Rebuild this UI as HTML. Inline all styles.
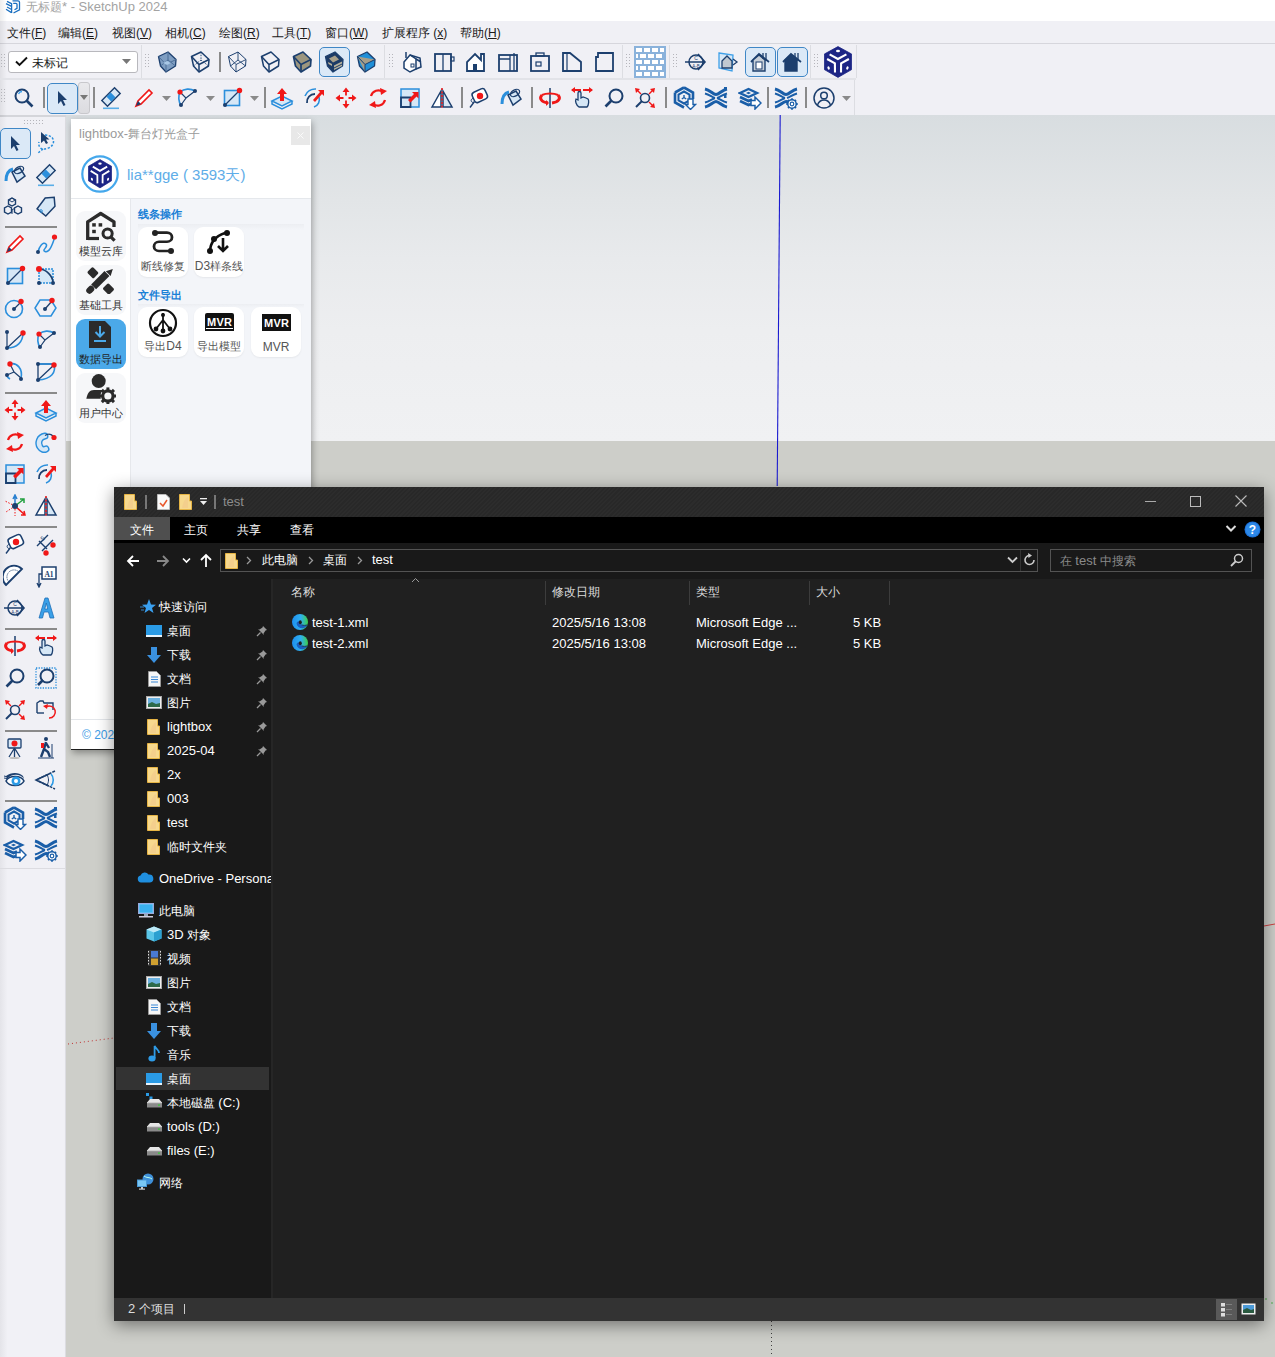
<!DOCTYPE html><html><head><meta charset="utf-8"><style>
*{box-sizing:border-box;margin:0;padding:0}
html,body{width:1275px;height:1357px;overflow:hidden;background:#cfcfca;font-family:"Liberation Sans",sans-serif;position:relative}
.a{position:absolute}
.t{white-space:nowrap}
.c{font-size:12px}
</style></head><body><div class="a" style="left:0px;top:0px;width:1275px;height:21px;background:#fff;"></div>
<div class="a" style="left:0px;top:21px;width:1275px;height:22px;background:#f0f0f5;"></div>
<div class="a" style="left:0px;top:43px;width:1275px;height:1px;background:#d6d6dc;"></div>
<div class="a" style="left:0px;top:44px;width:1275px;height:71px;background:#f0f0f5;"></div>
<div class="a" style="left:0px;top:115px;width:66px;height:2px;background:#d4d5da;"></div>
<div class="a" style="left:66px;top:115px;width:1209px;height:326px;background:linear-gradient(#d8dde0 0%,#e2e5e7 26%,#e8eaec 44%,#edeef0 66%,#f0f1f3 100%)"></div>
<div class="a" style="left:66px;top:441px;width:1275px;height:916px;background:#cdcec9;"></div>
<div class="a" style="left:0px;top:117px;width:66px;height:1240px;background:#f0f0f5;"></div>
<svg class="a" style="left:5px;top:0px;" width="16" height="14" viewBox="0 0 16 14"><path d="M2 1.4L7 3.8M1 3.6L6.5 6.3M2 7L6.5 9.5M1 9.3L6.5 12.6M6.6 3.5V13" fill="none" stroke="#1a6fc0" stroke-width="1.3"/><path d="M7.5 0.8H13Q14.5 0.8 14.5 2.3V9.8L8.5 13M8.2 3.3H11Q12 3.3 12 4.3V8.3L9.5 9.8" fill="none" stroke="#1a6fc0" stroke-width="1.3"/></svg>
<div class="a t" style="left:26px;top:-1.0px;font-size:12px;line-height:16px;color:#a3a3a3;">无标题<span style="font-size:13px">* - SketchUp 2024</span></div>
<div class="a t" style="left:7px;top:25.0px;font-size:12px;line-height:16px;color:#1a1a1a;">文件<span style="font-size:12px">(<u>F</u>)</span></div>
<div class="a t" style="left:58px;top:25.0px;font-size:12px;line-height:16px;color:#1a1a1a;">编辑<span style="font-size:12px">(<u>E</u>)</span></div>
<div class="a t" style="left:112px;top:25.0px;font-size:12px;line-height:16px;color:#1a1a1a;">视图<span style="font-size:12px">(<u>V</u>)</span></div>
<div class="a t" style="left:165px;top:25.0px;font-size:12px;line-height:16px;color:#1a1a1a;">相机<span style="font-size:12px">(<u>C</u>)</span></div>
<div class="a t" style="left:219px;top:25.0px;font-size:12px;line-height:16px;color:#1a1a1a;">绘图<span style="font-size:12px">(<u>R</u>)</span></div>
<div class="a t" style="left:272px;top:25.0px;font-size:12px;line-height:16px;color:#1a1a1a;">工具<span style="font-size:12px">(<u>T</u>)</span></div>
<div class="a t" style="left:325px;top:25.0px;font-size:12px;line-height:16px;color:#1a1a1a;">窗口<span style="font-size:12px">(<u>W</u>)</span></div>
<div class="a t" style="left:382px;top:25.0px;font-size:12px;line-height:16px;color:#1a1a1a;">扩展程序 <span style="font-size:12px">(<u>x</u>)</span></div>
<div class="a t" style="left:460px;top:25.0px;font-size:12px;line-height:16px;color:#1a1a1a;">帮助<span style="font-size:12px">(<u>H</u>)</span></div>
<div class="a" style="left:0px;top:0px;width:7px;height:117px;background:linear-gradient(90deg,rgba(0,0,0,.07),rgba(0,0,0,0));"></div>
<div class="a" style="left:0px;top:78px;width:856px;height:2px;background:#e2e3e8;"></div>
<div class="a" style="left:141px;top:45px;width:1px;height:33px;background:#dcdde2;"></div>
<div class="a" style="left:384px;top:45px;width:1px;height:33px;background:#dcdde2;"></div>
<div class="a" style="left:622px;top:45px;width:1px;height:33px;background:#dcdde2;"></div>
<div class="a" style="left:669px;top:45px;width:1px;height:33px;background:#dcdde2;"></div>
<div class="a" style="left:810px;top:45px;width:1px;height:33px;background:#dcdde2;"></div>
<div class="a" style="left:856px;top:45px;width:1px;height:33px;background:#dcdde2;"></div>
<div class="a" style="left:854px;top:80px;width:1px;height:35px;background:#dcdde2;"></div>
<svg class="a" style="left:1px;top:54px;" width="4" height="15" viewBox="0 0 4 15"><rect x="0" y="0" width="1" height="1" fill="#b5b5bb"/><rect x="3" y="0" width="1" height="1" fill="#b5b5bb"/><rect x="0" y="3" width="1" height="1" fill="#b5b5bb"/><rect x="3" y="3" width="1" height="1" fill="#b5b5bb"/><rect x="0" y="6" width="1" height="1" fill="#b5b5bb"/><rect x="3" y="6" width="1" height="1" fill="#b5b5bb"/><rect x="0" y="9" width="1" height="1" fill="#b5b5bb"/><rect x="3" y="9" width="1" height="1" fill="#b5b5bb"/><rect x="0" y="12" width="1" height="1" fill="#b5b5bb"/><rect x="3" y="12" width="1" height="1" fill="#b5b5bb"/></svg>
<svg class="a" style="left:145px;top:54px;" width="4" height="15" viewBox="0 0 4 15"><rect x="0" y="0" width="1" height="1" fill="#b5b5bb"/><rect x="3" y="0" width="1" height="1" fill="#b5b5bb"/><rect x="0" y="3" width="1" height="1" fill="#b5b5bb"/><rect x="3" y="3" width="1" height="1" fill="#b5b5bb"/><rect x="0" y="6" width="1" height="1" fill="#b5b5bb"/><rect x="3" y="6" width="1" height="1" fill="#b5b5bb"/><rect x="0" y="9" width="1" height="1" fill="#b5b5bb"/><rect x="3" y="9" width="1" height="1" fill="#b5b5bb"/><rect x="0" y="12" width="1" height="1" fill="#b5b5bb"/><rect x="3" y="12" width="1" height="1" fill="#b5b5bb"/></svg>
<svg class="a" style="left:389px;top:54px;" width="4" height="15" viewBox="0 0 4 15"><rect x="0" y="0" width="1" height="1" fill="#b5b5bb"/><rect x="3" y="0" width="1" height="1" fill="#b5b5bb"/><rect x="0" y="3" width="1" height="1" fill="#b5b5bb"/><rect x="3" y="3" width="1" height="1" fill="#b5b5bb"/><rect x="0" y="6" width="1" height="1" fill="#b5b5bb"/><rect x="3" y="6" width="1" height="1" fill="#b5b5bb"/><rect x="0" y="9" width="1" height="1" fill="#b5b5bb"/><rect x="3" y="9" width="1" height="1" fill="#b5b5bb"/><rect x="0" y="12" width="1" height="1" fill="#b5b5bb"/><rect x="3" y="12" width="1" height="1" fill="#b5b5bb"/></svg>
<svg class="a" style="left:626px;top:54px;" width="4" height="15" viewBox="0 0 4 15"><rect x="0" y="0" width="1" height="1" fill="#b5b5bb"/><rect x="3" y="0" width="1" height="1" fill="#b5b5bb"/><rect x="0" y="3" width="1" height="1" fill="#b5b5bb"/><rect x="3" y="3" width="1" height="1" fill="#b5b5bb"/><rect x="0" y="6" width="1" height="1" fill="#b5b5bb"/><rect x="3" y="6" width="1" height="1" fill="#b5b5bb"/><rect x="0" y="9" width="1" height="1" fill="#b5b5bb"/><rect x="3" y="9" width="1" height="1" fill="#b5b5bb"/><rect x="0" y="12" width="1" height="1" fill="#b5b5bb"/><rect x="3" y="12" width="1" height="1" fill="#b5b5bb"/></svg>
<svg class="a" style="left:673px;top:54px;" width="4" height="15" viewBox="0 0 4 15"><rect x="0" y="0" width="1" height="1" fill="#b5b5bb"/><rect x="3" y="0" width="1" height="1" fill="#b5b5bb"/><rect x="0" y="3" width="1" height="1" fill="#b5b5bb"/><rect x="3" y="3" width="1" height="1" fill="#b5b5bb"/><rect x="0" y="6" width="1" height="1" fill="#b5b5bb"/><rect x="3" y="6" width="1" height="1" fill="#b5b5bb"/><rect x="0" y="9" width="1" height="1" fill="#b5b5bb"/><rect x="3" y="9" width="1" height="1" fill="#b5b5bb"/><rect x="0" y="12" width="1" height="1" fill="#b5b5bb"/><rect x="3" y="12" width="1" height="1" fill="#b5b5bb"/></svg>
<svg class="a" style="left:814px;top:54px;" width="4" height="15" viewBox="0 0 4 15"><rect x="0" y="0" width="1" height="1" fill="#b5b5bb"/><rect x="3" y="0" width="1" height="1" fill="#b5b5bb"/><rect x="0" y="3" width="1" height="1" fill="#b5b5bb"/><rect x="3" y="3" width="1" height="1" fill="#b5b5bb"/><rect x="0" y="6" width="1" height="1" fill="#b5b5bb"/><rect x="3" y="6" width="1" height="1" fill="#b5b5bb"/><rect x="0" y="9" width="1" height="1" fill="#b5b5bb"/><rect x="3" y="9" width="1" height="1" fill="#b5b5bb"/><rect x="0" y="12" width="1" height="1" fill="#b5b5bb"/><rect x="3" y="12" width="1" height="1" fill="#b5b5bb"/></svg>
<svg class="a" style="left:1px;top:89px;" width="4" height="15" viewBox="0 0 4 15"><rect x="0" y="0" width="1" height="1" fill="#b5b5bb"/><rect x="3" y="0" width="1" height="1" fill="#b5b5bb"/><rect x="0" y="3" width="1" height="1" fill="#b5b5bb"/><rect x="3" y="3" width="1" height="1" fill="#b5b5bb"/><rect x="0" y="6" width="1" height="1" fill="#b5b5bb"/><rect x="3" y="6" width="1" height="1" fill="#b5b5bb"/><rect x="0" y="9" width="1" height="1" fill="#b5b5bb"/><rect x="3" y="9" width="1" height="1" fill="#b5b5bb"/><rect x="0" y="12" width="1" height="1" fill="#b5b5bb"/><rect x="3" y="12" width="1" height="1" fill="#b5b5bb"/></svg>
<div class="a" style="left:8px;top:51px;width:130px;height:22px;background:#fff;border:1px solid #b8b8bd;border-radius:3px"></div>
<svg class="a" style="left:15px;top:56px;" width="13" height="11" viewBox="0 0 13 11"><path d="M1 5.5L4.5 9L12 1.5" fill="none" stroke="#111" stroke-width="1.9"/></svg>
<div class="a t" style="left:32px;top:55.0px;font-size:12px;line-height:16px;color:#1a1a1a;">未标记</div>
<svg class="a" style="left:122px;top:59px;" width="9" height="5" viewBox="0 0 9 5"><path d="M0 0H9L4.5 5Z" fill="#777"/></svg>
<div class="a" style="left:0px;top:117px;width:7px;height:1240px;background:linear-gradient(90deg,#e4e4e9,#f0f0f5);"></div>
<div class="a" style="left:65px;top:117px;width:1px;height:1240px;background:#dcdce1;"></div>
<div class="a" style="left:0px;top:868px;width:65px;height:1px;background:#dcdce1;"></div>
<div class="a" style="left:7px;top:869px;width:57px;height:488px;background:#f1f1f6;"></div>
<svg class="a" style="left:24px;top:120px;" width="20" height="4" viewBox="0 0 20 4"><rect x="0" y="0" width="1" height="1" fill="#b5b5bb"/><rect x="0" y="3" width="1" height="1" fill="#b5b5bb"/><rect x="3" y="0" width="1" height="1" fill="#b5b5bb"/><rect x="3" y="3" width="1" height="1" fill="#b5b5bb"/><rect x="6" y="0" width="1" height="1" fill="#b5b5bb"/><rect x="6" y="3" width="1" height="1" fill="#b5b5bb"/><rect x="9" y="0" width="1" height="1" fill="#b5b5bb"/><rect x="9" y="3" width="1" height="1" fill="#b5b5bb"/><rect x="12" y="0" width="1" height="1" fill="#b5b5bb"/><rect x="12" y="3" width="1" height="1" fill="#b5b5bb"/><rect x="15" y="0" width="1" height="1" fill="#b5b5bb"/><rect x="15" y="3" width="1" height="1" fill="#b5b5bb"/><rect x="18" y="0" width="1" height="1" fill="#b5b5bb"/><rect x="18" y="3" width="1" height="1" fill="#b5b5bb"/></svg>
<div class="a" style="left:5px;top:226px;width:52px;height:2px;background:#8a8a8a;"></div>
<div class="a" style="left:5px;top:392px;width:52px;height:2px;background:#8a8a8a;"></div>
<div class="a" style="left:5px;top:526px;width:52px;height:2px;background:#8a8a8a;"></div>
<div class="a" style="left:5px;top:628px;width:52px;height:2px;background:#8a8a8a;"></div>
<div class="a" style="left:5px;top:730px;width:52px;height:2px;background:#8a8a8a;"></div>
<div class="a" style="left:5px;top:800px;width:52px;height:2px;background:#8a8a8a;"></div>
<svg class="a" style="left:770px;top:115px;" width="16" height="373" viewBox="0 0 16 373"><path d="M10.2 0L7.2 371" stroke="#1a1ad0" stroke-width="1.1"/></svg>
<svg class="a" style="left:66px;top:1034px;" width="48" height="12" viewBox="0 0 48 12"><path d="M2 10L48 4" stroke="#c03030" stroke-width="1" stroke-dasharray="1 3"/></svg>
<svg class="a" style="left:1264px;top:920px;" width="11" height="8" viewBox="0 0 11 8"><path d="M0 6L11 4" stroke="#d04040" stroke-width="1"/></svg>
<svg class="a" style="left:1262px;top:1296px;" width="13" height="14" viewBox="0 0 13 14"><circle cx="4" cy="3" r="0.7" fill="#2a2"/><circle cx="10" cy="7" r="0.7" fill="#2a2"/></svg>
<svg class="a" style="left:770px;top:1321px;" width="4" height="36" viewBox="0 0 4 36"><path d="M1.5 0V36" stroke="#404040" stroke-width="1" stroke-dasharray="1 3"/></svg>
<div class="a" style="left:71px;top:119px;width:240px;height:631px;background:#fff;box-shadow:1px 3px 7px rgba(0,0,0,.35)"></div>
<div class="a" style="left:71px;top:749px;width:240px;height:1px;background:#1e1e1e;"></div>
<div class="a t" style="left:79px;top:126.0px;font-size:12px;line-height:16px;color:#9a9a9a;"><span style="font-size:13px">lightbox-</span>舞台灯光盒子</div>
<div class="a" style="left:291px;top:126px;width:19px;height:19px;background:#e8e8e8;"></div>
<svg class="a" style="left:297px;top:132px;" width="7" height="7" viewBox="0 0 7 7"><path d="M0.5 0.5L6.5 6.5M6.5 0.5L0.5 6.5" stroke="#fafafa" stroke-width="1"/></svg>
<svg class="a" style="left:81px;top:155px;" width="38" height="38" viewBox="0 0 38 38"><circle cx="19" cy="19" r="17.7" fill="#fff" stroke="#45a8ec" stroke-width="2.2"/></svg>
<div class="a t" style="left:127px;top:165.0px;font-size:15px;line-height:20px;color:#5eade8;">lia**gge ( 3593天)</div>
<svg class="a" style="left:88px;top:159px;" width="24" height="30" viewBox="0 0 24 30"><g transform="scale(0.857,0.92)"><path d="M14 0.6L27.6 8V23.6L14 31.4L0.4 23.6V8Z" fill="#1c2585" stroke="#1c2585" stroke-width="0.8" stroke-linejoin="round"/><path d="M5.6 8.3L13.9 13L22.4 8.3M3.1 13L10.9 17.4L11 26.5M24.9 13L17.1 17.4L17 26.5" fill="none" stroke="#fff" stroke-width="2.1"/><ellipse cx="14" cy="5" rx="2" ry="1.3" fill="#fff"/><ellipse cx="4.6" cy="22" rx="1.1" ry="1.7" fill="#fff" transform="rotate(-25 4.6 22)"/><ellipse cx="23.4" cy="22" rx="1.1" ry="1.7" fill="#fff" transform="rotate(25 23.4 22)"/></g></svg>
<div class="a" style="left:71px;top:198px;width:240px;height:1px;background:#e5e8ec;"></div>
<div class="a" style="left:131px;top:199px;width:180px;height:520px;background:#f3f5f9;"></div>
<div class="a" style="left:130px;top:199px;width:1px;height:520px;background:#e6e8ec;"></div>
<div class="a" style="left:71px;top:719px;width:240px;height:1px;background:#e3e6ea;"></div>
<div class="a t" style="left:82px;top:727.0px;font-size:12px;line-height:16px;color:#3c9be6;">© 2024</div>
<div class="a" style="left:76px;top:211px;width:50px;height:50px;border-radius:9px;background:#f6f7f9"></div>
<div class="a t" style="left:79px;top:244.0px;font-size:11px;line-height:14px;color:#333;">模型云库</div>
<div class="a" style="left:76px;top:265px;width:50px;height:50px;border-radius:9px;background:#f6f7f9"></div>
<div class="a t" style="left:79px;top:298.0px;font-size:11px;line-height:14px;color:#333;">基础工具</div>
<div class="a" style="left:76px;top:319px;width:50px;height:50px;border-radius:9px;background:#4ba9e9"></div>
<div class="a t" style="left:79px;top:352.0px;font-size:11px;line-height:14px;color:#1f1f1f;">数据导出</div>
<div class="a" style="left:76px;top:373px;width:50px;height:50px;border-radius:9px;background:#f6f7f9"></div>
<div class="a t" style="left:79px;top:406.0px;font-size:11px;line-height:14px;color:#333;">用户中心</div>
<svg class="a" style="left:84px;top:210px;" width="32" height="32" viewBox="0 0 32 32"><path d="M3.7 30V11.8L16.7 3.5L30 11.8V17" fill="none" stroke="#2b2b2b" stroke-width="3.3" stroke-linejoin="round"/><path d="M3.7 28.5H15" stroke="#2b2b2b" stroke-width="3.2"/><rect x="8.2" y="13.2" width="3.6" height="3.4" fill="#2b2b2b"/><rect x="14.6" y="13.2" width="3.6" height="3.4" fill="#2b2b2b"/><rect x="8.2" y="19.8" width="3.6" height="3.4" fill="#2b2b2b"/><circle cx="23.6" cy="23.5" r="4.6" fill="none" stroke="#2b2b2b" stroke-width="3"/><path d="M26.8 26.8L30.6 30.6" stroke="#2b2b2b" stroke-width="3.2"/></svg>
<svg class="a" style="left:84px;top:264px;" width="30" height="30" viewBox="0 0 30 30"><rect x="4.4" y="4.7" width="9" height="8" rx="1.5" fill="#2b2b2b" transform="rotate(45 8.9 8.7)"/><rect x="20" y="21" width="9" height="8" rx="1.5" fill="#2b2b2b" transform="rotate(45 24.5 25)"/><path d="M9.6 22.9L23 9.5" stroke="#2b2b2b" stroke-width="7"/><path d="M5.5 26.5L7 25" stroke="#2b2b2b" stroke-width="6.5" stroke-linecap="round"/><path d="M28.8 5L21.8 7.2L26.6 12Z" fill="#2b2b2b"/></svg>
<svg class="a" style="left:88px;top:321px;" width="24" height="28" viewBox="0 0 24 28"><path d="M1 0H17L23 6V27H1Z" fill="#2b2b2b"/><path d="M12 5V15M7.5 11L12 15.5L16.5 11" fill="none" stroke="#4ba9e9" stroke-width="2"/><rect x="6" y="19" width="12" height="2" fill="#4ba9e9"/></svg>
<svg class="a" style="left:84px;top:372px;" width="32" height="32" viewBox="0 0 32 32"><circle cx="14.7" cy="9.1" r="7" fill="#2b2b2b"/><path d="M2.3 26.8C3.5 21 5.5 18 10 18H19.6L17.6 26.8Z" fill="#2b2b2b"/><circle cx="23.9" cy="24" r="7.6" fill="#f6f7f9"/><circle cx="23.9" cy="24" r="5.2" fill="none" stroke="#2b2b2b" stroke-width="3.2"/><rect x="22.40" y="15.40" width="3" height="3" fill="#2b2b2b" transform="rotate(0 23.9 24)"/><rect x="22.40" y="15.40" width="3" height="3" fill="#2b2b2b" transform="rotate(45 23.9 24)"/><rect x="22.40" y="15.40" width="3" height="3" fill="#2b2b2b" transform="rotate(90 23.9 24)"/><rect x="22.40" y="15.40" width="3" height="3" fill="#2b2b2b" transform="rotate(135 23.9 24)"/><rect x="22.40" y="15.40" width="3" height="3" fill="#2b2b2b" transform="rotate(180 23.9 24)"/><rect x="22.40" y="15.40" width="3" height="3" fill="#2b2b2b" transform="rotate(225 23.9 24)"/><rect x="22.40" y="15.40" width="3" height="3" fill="#2b2b2b" transform="rotate(270 23.9 24)"/><rect x="22.40" y="15.40" width="3" height="3" fill="#2b2b2b" transform="rotate(315 23.9 24)"/></svg>
<div class="a t" style="left:138px;top:207.0px;font-size:11px;line-height:14px;color:#1a80d6;"><b>线条操作</b></div>
<div class="a t" style="left:138px;top:288.0px;font-size:11px;line-height:14px;color:#1a80d6;"><b>文件导出</b></div>
<div class="a" style="left:138px;top:224px;width:166px;height:6px;background:linear-gradient(#eceef2,#f3f5f9);"></div>
<div class="a" style="left:138px;top:304px;width:166px;height:4px;background:linear-gradient(#eceef2,#f3f5f9);"></div>
<div class="a" style="left:138px;top:227px;width:50px;height:50px;border-radius:9px;background:#fff;box-shadow:0 1px 2px rgba(0,0,0,.06)"></div>
<div class="a t" style="left:138px;top:259px;width:50px;text-align:center;font-size:11px;line-height:14px;color:#555">断线修复</div>
<div class="a" style="left:194px;top:227px;width:50px;height:50px;border-radius:9px;background:#fff;box-shadow:0 1px 2px rgba(0,0,0,.06)"></div>
<div class="a t" style="left:194px;top:259px;width:50px;text-align:center;font-size:11px;line-height:14px;color:#555"><span style="font-size:12px">D3</span>样条线</div>
<div class="a" style="left:138px;top:307px;width:50px;height:50px;border-radius:9px;background:#fff;box-shadow:0 1px 2px rgba(0,0,0,.06)"></div>
<div class="a t" style="left:138px;top:339px;width:50px;text-align:center;font-size:11px;line-height:14px;color:#555">导出<span style="font-size:12px">D4</span></div>
<div class="a" style="left:194px;top:307px;width:50px;height:50px;border-radius:9px;background:#fff;box-shadow:0 1px 2px rgba(0,0,0,.06)"></div>
<div class="a t" style="left:194px;top:339px;width:50px;text-align:center;font-size:11px;line-height:14px;color:#555">导出模型</div>
<div class="a" style="left:251px;top:307px;width:50px;height:50px;border-radius:9px;background:#fff;box-shadow:0 1px 2px rgba(0,0,0,.06)"></div>
<div class="a t" style="left:251px;top:340px;width:50px;text-align:center;font-size:11px;line-height:14px;color:#555"><span style="font-size:12px">MVR</span></div>
<svg class="a" style="left:150px;top:230px;" width="26" height="26" viewBox="0 0 26 26"><path d="M5 5H17A5 5 0 0 1 17 15H9A5 5 0 0 0 9 25H21" fill="none" stroke="#222" stroke-width="2.8" transform="translate(0,-2) scale(1,0.92)"/><circle cx="5" cy="3" r="3" fill="#222"/><circle cx="21" cy="21" r="3" fill="#222"/></svg>
<svg class="a" style="left:205px;top:229px;" width="28" height="28" viewBox="0 0 28 28"><path d="M5 23C5 15 8 8 20 4" fill="none" stroke="#111" stroke-width="2.6"/><circle cx="5" cy="22" r="3" fill="#111"/><circle cx="9" cy="10" r="3" fill="#111"/><circle cx="22" cy="4" r="3" fill="#111"/><path d="M18 9V22M13 17L18 22L23 17" fill="none" stroke="#111" stroke-width="2.6"/></svg>
<svg class="a" style="left:148px;top:308px;" width="30" height="30" viewBox="0 0 30 30"><circle cx="15" cy="15" r="13" fill="none" stroke="#111" stroke-width="2.2"/><path d="M15 5V17M15 12L8 21M15 12L22 21M15 17V24" stroke="#111" stroke-width="1.8" fill="none"/><circle cx="15" cy="7" r="2" fill="#111"/><circle cx="8" cy="21" r="2.4" fill="#111"/><circle cx="15" cy="23" r="2.4" fill="#111"/><circle cx="22" cy="21" r="2.4" fill="#111"/></svg>
<svg class="a" style="left:205px;top:313px;" width="29" height="19" viewBox="0 0 29 19"><rect x="0" y="0" width="29" height="17" rx="2" fill="#111"/><rect x="0" y="15" width="29" height="3" fill="#111"/><rect x="1" y="15" width="27" height="1" fill="#fff"/><text x="14.5" y="12.5" font-size="11" font-weight="bold" font-family="Liberation Sans" fill="#fff" text-anchor="middle" textLength="25">MVR</text></svg>
<svg class="a" style="left:262px;top:314px;" width="29" height="19" viewBox="0 0 29 19"><rect x="0" y="0" width="29" height="17" rx="0" fill="#111"/><text x="14.5" y="12.5" font-size="11" font-weight="bold" font-family="Liberation Sans" fill="#fff" text-anchor="middle" textLength="25">MVR</text></svg>
<svg class="a" style="left:155px;top:50px;" width="24" height="24" viewBox="0 0 24 24"><path d="M3.5 6.5L13 2L21 9.5L20.5 16L11 22L5.5 16Z" fill="#7f9ec2" stroke="#1c3f6e" stroke-width="1.3" stroke-linejoin="round"/><path d="M3.5 6.5L11 14.5L21 9.5M11 14.5V22M13 2V10L5.5 16M13 10L20.5 16" fill="none" stroke="#4d6f98" stroke-width="1"/><path d="M8 13L12 11L16 13L12 15Z" fill="#a9c8e6"/></svg>
<svg class="a" style="left:188px;top:50px;" width="24" height="24" viewBox="0 0 24 24"><path d="M3.5 6.5L13 2L21 9.5L20.5 16L11 22L5.5 16Z" fill="none" stroke="#1c3f6e" stroke-width="1.5" stroke-linejoin="round"/><path d="M3.5 6.5L11 14.5L21 9.5M11 14.5V22" fill="none" stroke="#1c3f6e" stroke-width="1.5"/><path d="M13 2V10M13 10L5.5 16M13 10L20.5 16" fill="none" stroke="#1c3f6e" stroke-width="0.9" stroke-dasharray="1.5 1.2"/></svg>
<div class="a" style="left:219px;top:52px;width:2px;height:20px;background:#8a8a8a;"></div>
<svg class="a" style="left:225px;top:50px;" width="24" height="24" viewBox="0 0 24 24"><path d="M3.5 6.5L13 2L21 9.5L20.5 16L11 22L5.5 16Z" fill="none" stroke="#1c3f6e" stroke-width="1" stroke-linejoin="round"/><path d="M3.5 6.5L11 14.5L21 9.5M11 14.5V22M13 2V10L5.5 16M13 10L20.5 16" fill="none" stroke="#1c3f6e" stroke-width="0.9"/></svg>
<svg class="a" style="left:258px;top:50px;" width="24" height="24" viewBox="0 0 24 24"><path d="M3.5 6.5L13 2L21 9.5L20.5 16L11 22L5.5 16Z" fill="none" stroke="#1c3f6e" stroke-width="1.5" stroke-linejoin="round"/><path d="M3.5 6.5L11 14.5L21 9.5M11 14.5V22" fill="none" stroke="#1c3f6e" stroke-width="1.5"/></svg>
<svg class="a" style="left:290px;top:50px;" width="24" height="24" viewBox="0 0 24 24"><path d="M3.5 6.5L13 2L21 9.5L20.5 16L11 22L5.5 16Z" fill="#9c967f" stroke="#1c3f6e" stroke-width="1.7" stroke-linejoin="round"/><path d="M3.5 6.5L11 14.5L21 9.5M11 14.5V22" fill="none" stroke="#1c3f6e" stroke-width="1.7"/></svg>
<div class="a" style="left:319px;top:47px;width:31px;height:30px;background:#dbe9f7;border:1px solid #3f87c6;border-radius:5px"></div>
<svg class="a" style="left:322px;top:50px;" width="24" height="24" viewBox="0 0 24 24"><path d="M3.5 6.5L13 2L21 9.5L20.5 16L11 22L5.5 16Z" fill="#1c3b66" stroke="#1c3f6e" stroke-width="1.3" stroke-linejoin="round"/><path d="M7 8.5L13 5.5L17 9.5L11 12.5Z" fill="#a8a08a"/><path d="M6 12L10 14V16L6.5 14Z M20 11.5L12 15.5V17.5L20 13.5Z M20 14.5L12 18.5V20L20 16Z" fill="#b8b29c"/></svg>
<svg class="a" style="left:354px;top:50px;" width="24" height="24" viewBox="0 0 24 24"><path d="M3.5 6.5L13 2L21 9.5L20.5 16L11 22L5.5 16Z" fill="#1f8fd8" stroke="#1c3f6e" stroke-width="1.3" stroke-linejoin="round"/><path d="M3.5 6.5L21 9.5L11 14.5Z" fill="#a49e8a"/><path d="M3.5 6.5L11 14.5L11 22Z" fill="#a49e8a"/><path d="M3.5 6.5L11 14.5L21 9.5M11 14.5V22" fill="none" stroke="#1c3f6e" stroke-width="1"/></svg>
<svg class="a" style="left:400px;top:50px;" width="24" height="24" viewBox="0 0 24 24"><path d="M4 12L10 5L16 9V19L10 22L4 18Z" fill="#fff" stroke="#1c3f6e" stroke-width="1.5"/><path d="M10 5L20 8L21 17L16 19M16 9L21 12" fill="none" stroke="#1c3f6e" stroke-width="1.5"/><path d="M6 2V8" stroke="#1c3f6e" stroke-width="1.5"/><rect x="11" y="14" width="3" height="3" fill="none" stroke="#1c3f6e" stroke-width="1"/></svg>
<svg class="a" style="left:432px;top:50px;" width="24" height="24" viewBox="0 0 24 24"><rect x="3" y="4" width="16" height="17" fill="none" stroke="#1c3f6e" stroke-width="1.8"/><path d="M11 4V21" stroke="#1c3f6e" stroke-width="1.3"/><rect x="19" y="7" width="3" height="4" fill="none" stroke="#1c3f6e" stroke-width="1.2"/></svg>
<svg class="a" style="left:464px;top:50px;" width="24" height="24" viewBox="0 0 24 24"><path d="M3 21V12L11 4L17 10V4H20V21Z" fill="#fff" stroke="#1c3f6e" stroke-width="1.8"/><rect x="9" y="14" width="4" height="7" fill="#1c3f6e"/></svg>
<svg class="a" style="left:496px;top:50px;" width="24" height="24" viewBox="0 0 24 24"><rect x="3" y="5" width="18" height="16" fill="none" stroke="#1c3f6e" stroke-width="1.8"/><path d="M3 9H14M14 5V21M18 3V21" stroke="#1c3f6e" stroke-width="1.3"/></svg>
<svg class="a" style="left:528px;top:50px;" width="24" height="24" viewBox="0 0 24 24"><rect x="3" y="6" width="18" height="15" fill="none" stroke="#1c3f6e" stroke-width="1.8"/><rect x="8" y="3" width="8" height="3" fill="none" stroke="#1c3f6e" stroke-width="1.3"/><rect x="8" y="12" width="5" height="4" fill="none" stroke="#1c3f6e" stroke-width="1.2"/></svg>
<svg class="a" style="left:560px;top:50px;" width="24" height="24" viewBox="0 0 24 24"><path d="M3 21V3L10 3L21 12V21Z" fill="none" stroke="#1c3f6e" stroke-width="1.8"/><path d="M7 3V21" stroke="#1c3f6e" stroke-width="1.2"/></svg>
<svg class="a" style="left:592px;top:50px;" width="24" height="24" viewBox="0 0 24 24"><path d="M6 3H21V21H4V7H6Z" fill="none" stroke="#1c3f6e" stroke-width="1.8"/></svg>
<svg class="a" style="left:634px;top:46px;" width="32" height="32" viewBox="0 0 32 32"><rect x="0" y="0" width="32" height="32" fill="#8ab2db"/><rect x="2" y="2" width="6" height="4" fill="#fff"/><rect x="10" y="2" width="6" height="4" fill="#fff"/><rect x="18" y="2" width="6" height="4" fill="#fff"/><rect x="26" y="2" width="4" height="4" fill="#fff"/><rect x="34" y="2" width="-4" height="4" fill="#fff"/><rect x="2" y="8" width="2" height="4" fill="#fff"/><rect x="6" y="8" width="6" height="4" fill="#fff"/><rect x="14" y="8" width="6" height="4" fill="#fff"/><rect x="22" y="8" width="6" height="4" fill="#fff"/><rect x="30" y="8" width="0" height="4" fill="#fff"/><rect x="2" y="14" width="6" height="4" fill="#fff"/><rect x="10" y="14" width="6" height="4" fill="#fff"/><rect x="18" y="14" width="6" height="4" fill="#fff"/><rect x="26" y="14" width="4" height="4" fill="#fff"/><rect x="34" y="14" width="-4" height="4" fill="#fff"/><rect x="2" y="20" width="2" height="4" fill="#fff"/><rect x="6" y="20" width="6" height="4" fill="#fff"/><rect x="14" y="20" width="6" height="4" fill="#fff"/><rect x="22" y="20" width="6" height="4" fill="#fff"/><rect x="30" y="20" width="0" height="4" fill="#fff"/><rect x="2" y="26" width="6" height="4" fill="#fff"/><rect x="10" y="26" width="6" height="4" fill="#fff"/><rect x="18" y="26" width="6" height="4" fill="#fff"/><rect x="26" y="26" width="4" height="4" fill="#fff"/><rect x="34" y="26" width="-4" height="4" fill="#fff"/></svg>
<svg class="a" style="left:684px;top:50px;" width="24" height="24" viewBox="0 0 24 24"><circle cx="12" cy="12" r="7" fill="none" stroke="#1c3f6e" stroke-width="1.5"/><path d="M1 12H20M14 4L21 12L14 20" fill="none" stroke="#1c3f6e" stroke-width="1.6"/><text x="12" y="10" font-size="5" fill="#1c3f6e" text-anchor="middle" font-family="Liberation Sans">C</text><text x="12" y="17.5" font-size="4.5" fill="#1c3f6e" text-anchor="middle" font-family="Liberation Sans">A-B</text></svg>
<svg class="a" style="left:716px;top:50px;" width="24" height="24" viewBox="0 0 24 24"><path d="M3 3L17 5L16 21L3 18Z" fill="#d6e7f6" stroke="#3fa0e8" stroke-width="1.3"/><path d="M6 11L11 6L16 11V18H6Z" fill="#c0c8d0" stroke="#1c3f6e" stroke-width="1.3"/><path d="M17 9L21 12L17 15" fill="none" stroke="#1c3f6e" stroke-width="1.3"/></svg>
<div class="a" style="left:745px;top:47px;width:31px;height:30px;background:#dbe9f7;border:1px solid #3f87c6;border-radius:5px"></div>
<svg class="a" style="left:748px;top:50px;" width="24" height="24" viewBox="0 0 24 24"><path d="M3 12L11 4L21 12" fill="none" stroke="#1c3f6e" stroke-width="1.8"/><path d="M5 10V21H17V10L11 5Z" fill="#c8d0d8" stroke="#1c3f6e" stroke-width="1.4"/><path d="M15 3V9M18 3V11" stroke="#1c3f6e" stroke-width="1.3"/><rect x="8" y="12" width="6" height="7" fill="#fff" stroke="#1c3f6e" stroke-width="1"/></svg>
<div class="a" style="left:777px;top:47px;width:31px;height:30px;background:#dbe9f7;border:1px solid #3f87c6;border-radius:5px"></div>
<svg class="a" style="left:780px;top:50px;" width="24" height="24" viewBox="0 0 24 24"><path d="M3 12L11 4L21 12" fill="none" stroke="#1c3f6e" stroke-width="1.8"/><path d="M5 10V21H17V10L11 5Z" fill="#1c3f6e" stroke="#1c3f6e" stroke-width="1.4"/><path d="M15 3V9M18 3V11" stroke="#1c3f6e" stroke-width="1.3"/></svg>
<svg class="a" style="left:824px;top:46px;" width="28" height="32" viewBox="0 0 28 32"><path d="M14 0.6L27.6 8V23.6L14 31.4L0.4 23.6V8Z" fill="#1c2585" stroke="#1c2585" stroke-width="0.8" stroke-linejoin="round"/><path d="M5.6 8.3L13.9 13L22.4 8.3M3.1 13L10.9 17.4L11 26.5M24.9 13L17.1 17.4L17 26.5" fill="none" stroke="#fff" stroke-width="2.1"/><ellipse cx="14" cy="5" rx="2" ry="1.3" fill="#fff"/><ellipse cx="4.6" cy="22" rx="1.1" ry="1.7" fill="#fff" transform="rotate(-25 4.6 22)"/><ellipse cx="23.4" cy="22" rx="1.1" ry="1.7" fill="#fff" transform="rotate(25 23.4 22)"/></svg>
<svg class="a" style="left:12px;top:86px;" width="24" height="24" viewBox="0 0 24 24"><circle cx="10" cy="10" r="6.5" fill="none" stroke="#1c3f6e" stroke-width="2"/><path d="M14.5 14.5L20.5 20.5" stroke="#1c3f6e" stroke-width="2.6"/><path d="M6.5 8A4 4 0 0 1 10 5.5" stroke="#39a0ee" stroke-width="1.3" fill="none"/></svg>
<div class="a" style="left:43px;top:87px;width:2px;height:21px;background:#8a8a8a;"></div>
<div class="a" style="left:47px;top:83px;width:31px;height:31px;background:#dbe9f7;border:1px solid #3f87c6;border-radius:5px"></div>
<div class="a" style="left:78px;top:82px;width:12px;height:32px;background:linear-gradient(#e9e9ec,#dcdce0);border:1px solid #c8c8cc;border-radius:3px"></div>
<svg class="a" style="left:80px;top:95px;" width="8" height="5" viewBox="0 0 8 5"><path d="M0 0H8L4 5Z" fill="#777"/></svg>
<svg class="a" style="left:50px;top:86px;" width="24" height="24" viewBox="0 0 24 24"><path d="M8 5L8 18L11 15L13.5 20L15.5 19L13 14L17 14Z" fill="#1c3f6e"/></svg>
<div class="a" style="left:93px;top:87px;width:2px;height:21px;background:#8a8a8a;"></div>
<svg class="a" style="left:99px;top:86px;" width="24" height="24" viewBox="0 0 24 24"><g transform="rotate(-45 12 11)"><rect x="3" y="7" width="18" height="8" fill="#d6e7f6" stroke="#1c3f6e" stroke-width="1.4"/><rect x="9" y="7.7" width="6" height="6.6" fill="#2b8fdc"/></g><rect x="4" y="21.5" width="16" height="1.6" fill="#5aaee8"/></svg>
<svg class="a" style="left:132px;top:86px;" width="24" height="24" viewBox="0 0 24 24"><path d="M4 20L6 15L17 4L20 7L9 18Z" fill="#fff" stroke="#f01818" stroke-width="1.6"/><path d="M4 20L6 15L9 18Z" fill="#1c3f6e"/></svg>
<svg class="a" style="left:162px;top:96px;" width="9" height="5" viewBox="0 0 9 5"><path d="M0 0H9L4.5 5Z" fill="#8a8a8a"/></svg>
<svg class="a" style="left:175px;top:86px;" width="24" height="24" viewBox="0 0 24 24"><path d="M5 6A13 13 0 0 1 20 5" fill="none" stroke="#2b8fdc" stroke-width="1.6"/><path d="M5 6C3 10 3.5 16 6 19" fill="none" stroke="#2b8fdc" stroke-width="1.6"/><path d="M5 6L11 12L6 19M11 12L20 5" stroke="#1c3f6e" stroke-width="1.2" fill="none"/><circle cx="5" cy="6" r="2.6" fill="#f01818"/><circle cx="20" cy="5" r="2" fill="#1c3f6e"/><circle cx="6" cy="19" r="2" fill="#1c3f6e"/></svg>
<svg class="a" style="left:206px;top:96px;" width="9" height="5" viewBox="0 0 9 5"><path d="M0 0H9L4.5 5Z" fill="#8a8a8a"/></svg>
<svg class="a" style="left:220px;top:86px;" width="24" height="24" viewBox="0 0 24 24"><rect x="4.5" y="4.5" width="15" height="15" fill="#d6e7f6" stroke="#2b8fdc" stroke-width="1.6"/><path d="M5 19L19 5" stroke="#1c3f6e" stroke-width="1.3"/><circle cx="19.5" cy="4.5" r="2.7" fill="#f01818"/><circle cx="5" cy="19" r="2" fill="#1c3f6e"/></svg>
<svg class="a" style="left:250px;top:96px;" width="9" height="5" viewBox="0 0 9 5"><path d="M0 0H9L4.5 5Z" fill="#8a8a8a"/></svg>
<div class="a" style="left:264px;top:87px;width:2px;height:21px;background:#8a8a8a;"></div>
<svg class="a" style="left:270px;top:86px;" width="24" height="24" viewBox="0 0 24 24"><path d="M2 15L12 10L22 15L12 20Z" fill="#d6e7f6" stroke="#2b8fdc" stroke-width="1.5"/><path d="M2 15V18L12 23L22 18V15" fill="none" stroke="#2b8fdc" stroke-width="1.5"/><path d="M10 15V8H7L12 2L17 8H14V15Z" fill="#f01818"/></svg>
<svg class="a" style="left:302px;top:86px;" width="24" height="24" viewBox="0 0 24 24"><path d="M5 17A8 8 0 0 1 13 8" fill="none" stroke="#1c3f6e" stroke-width="1.8"/><path d="M3 10A11 11 0 0 1 14 3" fill="none" stroke="#2b8fdc" stroke-width="1.6"/><path d="M17 11A8 8 0 0 1 12 21" fill="none" stroke="#2b8fdc" stroke-width="1.6"/><path d="M11 14L18 6L16 4H22V10L20 8L13 16Z" fill="#f01818"/></svg>
<svg class="a" style="left:334px;top:86px;" width="24" height="24" viewBox="0 0 24 24"><path d="M12 5V9.5M12 14.5V19M5 12H9.5M14.5 12H19" stroke="#f01818" stroke-width="1.8"/><path d="M12 1.5L15.5 6H8.5Z M12 22.5L8.5 18H15.5Z M1.5 12L6 8.5V15.5Z M22.5 12L18 15.5V8.5Z" fill="#f01818"/></svg>
<svg class="a" style="left:366px;top:86px;" width="24" height="24" viewBox="0 0 24 24"><path d="M5 10A7.5 7.5 0 0 1 17 6" fill="none" stroke="#f01818" stroke-width="2.2"/><path d="M19 14A7.5 7.5 0 0 1 7 18" fill="none" stroke="#f01818" stroke-width="2.2"/><path d="M14 2L21 5L15 9Z" fill="#f01818"/><path d="M10 22L3 19L9 15Z" fill="#f01818"/></svg>
<svg class="a" style="left:398px;top:86px;" width="24" height="24" viewBox="0 0 24 24"><rect x="3" y="3" width="18" height="18" fill="#d6e7f6" stroke="#2b8fdc" stroke-width="1.5"/><path d="M3 11.5H12.5V21H3Z" fill="none" stroke="#1c3f6e" stroke-width="1.8"/><path d="M10 14L16 8L14 6H20.5V12.5L18.5 10.5L12.5 16.5Z" fill="#f01818"/></svg>
<svg class="a" style="left:430px;top:86px;" width="24" height="24" viewBox="0 0 24 24"><path d="M2 21L11 5V21Z" fill="#fff" stroke="#1c3f6e" stroke-width="1.5"/><path d="M13 5L22 21H13Z" fill="#d6e7f6" stroke="#1c3f6e" stroke-width="1.5"/><path d="M12 2V23" stroke="#f01818" stroke-width="1.5" stroke-dasharray="2 1.5"/></svg>
<div class="a" style="left:461px;top:87px;width:2px;height:21px;background:#8a8a8a;"></div>
<svg class="a" style="left:467px;top:86px;" width="24" height="24" viewBox="0 0 24 24"><g transform="rotate(-25 13 10)"><rect x="6" y="4" width="14" height="11" rx="3" fill="#fff" stroke="#1c3f6e" stroke-width="1.5"/></g><circle cx="13" cy="10" r="3.2" fill="#f01818"/><path d="M7.5 15.5L3 21.5" stroke="#1c3f6e" stroke-width="1.4"/><path d="M6 12.5C3.5 13 3.5 16 6 16.5" fill="none" stroke="#1c3f6e" stroke-width="1"/></svg>
<svg class="a" style="left:499px;top:86px;" width="24" height="24" viewBox="0 0 24 24"><path d="M9 9L17 5L22 13L14 19Z" fill="#d6e7f6" stroke="#1c3f6e" stroke-width="1.5"/><ellipse cx="16" cy="7" rx="5" ry="3" fill="none" stroke="#1c3f6e" stroke-width="1.3" transform="rotate(-30 16 7)"/><path d="M10 6C6 7 3 11 3 18" fill="none" stroke="#2b8fdc" stroke-width="3"/></svg>
<div class="a" style="left:531px;top:87px;width:2px;height:21px;background:#8a8a8a;"></div>
<svg class="a" style="left:538px;top:86px;" width="24" height="24" viewBox="0 0 24 24"><path d="M12 2V22" stroke="#1c3f6e" stroke-width="1.5"/><path d="M4 9C1 12 3 16 10 17M14 17C21 16 23 12 20 9" fill="none" stroke="#f01818" stroke-width="3"/><path d="M4 9C8 7 16 7 20 9" fill="none" stroke="#f01818" stroke-width="2"/><path d="M8 14L11 17L8 20Z" fill="#f01818"/></svg>
<svg class="a" style="left:570px;top:86px;" width="24" height="24" viewBox="0 0 24 24"><path d="M9 21C6 19 5 15 6 13L8 14V7A1.5 1.5 0 0 1 11 7V12L13 11L16 12L18 13C19 14 19 19 17 21Z" fill="#d6e7f6" stroke="#1c3f6e" stroke-width="1.3"/><path d="M2 4H11M13 4H22" stroke="#f01818" stroke-width="2"/><path d="M5 1V7L1 4ZM19 1V7L23 4Z" fill="#f01818"/></svg>
<svg class="a" style="left:602px;top:86px;" width="24" height="24" viewBox="0 0 24 24"><circle cx="14" cy="10" r="6.5" fill="none" stroke="#1c3f6e" stroke-width="2"/><path d="M9.5 14.5L3.5 20.5" stroke="#1c3f6e" stroke-width="2.6"/></svg>
<svg class="a" style="left:633px;top:86px;" width="24" height="24" viewBox="0 0 24 24"><circle cx="12" cy="12" r="4.5" fill="none" stroke="#1c3f6e" stroke-width="1.6"/><path d="M9 15L3 21" stroke="#1c3f6e" stroke-width="2"/><path d="M2 2L7 3L3 7Z M22 2L21 7L17 3Z M22 22L17 21L21 17Z" fill="#f01818"/><path d="M4 4L8 8M20 4L16 8M20 20L16 16" stroke="#f01818" stroke-width="1.4"/></svg>
<div class="a" style="left:665px;top:87px;width:2px;height:21px;background:#8a8a8a;"></div>
<svg class="a" style="left:673px;top:86px;" width="24" height="24" viewBox="0 0 24 24"><path d="M11 1.5L20 6.5V13M2 6.5V16.5L11 21.5" fill="none" stroke="#1a5ea8" stroke-width="2.6"/><path d="M2 6.5L11 1.5" stroke="#1a5ea8" stroke-width="2.6"/><path d="M11 5.5L16.5 8.5V14.5L11 17.5L5.5 14.5V8.5Z" fill="none" stroke="#1a5ea8" stroke-width="2"/><path d="M11 9V11.5M11 11.5L8.8 13M11 11.5L13.2 13" stroke="#1a5ea8" stroke-width="1.4"/><path d="M15 13V18.5H12.5L17.5 23.5L22.5 18.5H20V13Z" fill="#fff" stroke="#1a5ea8" stroke-width="1.4"/></svg>
<svg class="a" style="left:704px;top:86px;" width="24" height="24" viewBox="0 0 24 24"><path d="M1 3C6 4 9 8.5 12 8.5C15 8.5 18 4 23 3" fill="none" stroke="#1a5ea8" stroke-width="3.2"/><path d="M1 7.5C5 8.5 8 11 11 12M13 12C16 11 19 8.5 23 7.5" fill="none" stroke="#1a5ea8" stroke-width="2"/><path d="M1 21C6 20 9 15.5 12 15.5C15 15.5 18 20 23 21" fill="none" stroke="#1a5ea8" stroke-width="3.2"/><path d="M1 16.5C5 15.5 8 13 11 12M13 12C16 13 19 15.5 23 16.5" fill="none" stroke="#1a5ea8" stroke-width="2"/><rect x="20" y="1" width="3" height="3" fill="#1a5ea8"/><rect x="20" y="9" width="2.5" height="3" fill="#1a5ea8"/></svg>
<svg class="a" style="left:738px;top:86px;" width="24" height="24" viewBox="0 0 24 24"><path d="M2 7L10.5 3L19 7L10.5 11Z" fill="none" stroke="#1a5ea8" stroke-width="2.4"/><path d="M8 7L10.5 5.8L13 7L10.5 8.2Z" fill="#1a5ea8"/><path d="M2 11L10.5 15L14 13.5M2 15L10.5 19L13 18" fill="none" stroke="#1a5ea8" stroke-width="2.6"/><path d="M13 14.5H17V11L23 17L17 23V19.5H13Z" fill="#fff" stroke="#1a5ea8" stroke-width="1.5"/></svg>
<div class="a" style="left:767px;top:87px;width:2px;height:21px;background:#8a8a8a;"></div>
<svg class="a" style="left:774px;top:86px;" width="24" height="24" viewBox="0 0 24 24"><path d="M1 3C6 4 9 8.5 12 8.5C15 8.5 18 4 23 3" fill="none" stroke="#1a5ea8" stroke-width="3.2"/><path d="M1 7.5C5 8.5 8 11 11 12M13 12C16 11 19 8.5 23 7.5" fill="none" stroke="#1a5ea8" stroke-width="2"/><path d="M1 21C6 20 9 15.5 12 15.5C13 15.5 14 16 14.5 16.5" fill="none" stroke="#1a5ea8" stroke-width="3.2"/><path d="M1 16.5C5 15.5 8 13 11 12" fill="none" stroke="#1a5ea8" stroke-width="2"/><circle cx="18" cy="18" r="4.2" fill="#fff" stroke="#1a5ea8" stroke-width="1.5"/><circle cx="18" cy="18" r="1.8" fill="none" stroke="#1a5ea8" stroke-width="1.2"/><path d="M18 12.3V14M18 22V23.7M12.3 18H14M22 18H23.7M14 14L15.2 15.2M20.8 20.8L22 22M14 22L15.2 20.8M20.8 15.2L22 14" stroke="#1a5ea8" stroke-width="1.8"/></svg>
<div class="a" style="left:805px;top:87px;width:2px;height:21px;background:#8a8a8a;"></div>
<svg class="a" style="left:812px;top:86px;" width="24" height="24" viewBox="0 0 24 24"><circle cx="12" cy="12" r="10" fill="none" stroke="#1c3f6e" stroke-width="1.5"/><circle cx="12" cy="9.5" r="3.3" fill="none" stroke="#1c3f6e" stroke-width="1.5"/><path d="M5.5 19C7 15 9 14 12 14C15 14 17 15 18.5 19" fill="none" stroke="#1c3f6e" stroke-width="1.5"/></svg>
<svg class="a" style="left:842px;top:96px;" width="9" height="5" viewBox="0 0 9 5"><path d="M0 0H9L4.5 5Z" fill="#8a8a8a"/></svg>
<div class="a" style="left:0px;top:128px;width:31px;height:31px;background:#dbe9f7;border:1px solid #3f87c6;border-radius:5px"></div>
<svg class="a" style="left:3px;top:131px;" width="24" height="24" viewBox="0 0 24 24"><path d="M8 5L8 18L11 15L13.5 20L15.5 19L13 14L17 14Z" fill="#1c3f6e"/></svg>
<svg class="a" style="left:34px;top:131px;" width="24" height="24" viewBox="0 0 24 24"><path d="M11 4C17 4 21 8 19 13C17 17 12 18 9 18C6 18 4 14 5 11M9 18L4 22" fill="none" stroke="#2b8fdc" stroke-width="1.5" stroke-dasharray="2.2 1.6"/><path d="M7 1L7 12L10 9.5L12 13L14 12L12 8.5L15.5 8.5Z" fill="#1c3f6e"/></svg>
<svg class="a" style="left:3px;top:163px;" width="24" height="24" viewBox="0 0 24 24"><path d="M9 9L17 5L22 13L14 19Z" fill="#d6e7f6" stroke="#1c3f6e" stroke-width="1.5"/><ellipse cx="16" cy="7" rx="5" ry="3" fill="none" stroke="#1c3f6e" stroke-width="1.3" transform="rotate(-30 16 7)"/><path d="M10 6C6 7 3 11 3 18" fill="none" stroke="#2b8fdc" stroke-width="3"/></svg>
<svg class="a" style="left:34px;top:163px;" width="24" height="24" viewBox="0 0 24 24"><g transform="rotate(-45 12 11)"><rect x="3" y="7" width="18" height="8" fill="#d6e7f6" stroke="#1c3f6e" stroke-width="1.4"/><rect x="9" y="7.7" width="6" height="6.6" fill="#2b8fdc"/></g><rect x="4" y="21.5" width="16" height="1.6" fill="#5aaee8"/></svg>
<svg class="a" style="left:3px;top:195px;" width="24" height="24" viewBox="0 0 24 24"><path d="M9 3L12.5 5V9L9 11L5.5 9V5Z M5 11L8.5 13V17L5 19L1.5 17V13Z M15 11L18.5 13V17L15 19L11.5 17V13Z" fill="none" stroke="#1c3f6e" stroke-width="1.4"/><path d="M9 3L12 5L9 7L6 5Z M12 13L9 15V19" fill="none" stroke="#1c3f6e" stroke-width="1"/></svg>
<svg class="a" style="left:34px;top:195px;" width="24" height="24" viewBox="0 0 24 24"><path d="M3 13L12 3H21V12L11 21Z" fill="#d6e7f6" stroke="#1c3f6e" stroke-width="1.5" transform="rotate(-5 12 12)"/><circle cx="7" cy="16" r="1.3" fill="none" stroke="#2b8fdc" stroke-width="1"/></svg>
<svg class="a" style="left:3px;top:232px;" width="24" height="24" viewBox="0 0 24 24"><path d="M4 20L6 15L17 4L20 7L9 18Z" fill="#fff" stroke="#f01818" stroke-width="1.6"/><path d="M4 20L6 15L9 18Z" fill="#1c3f6e"/></svg>
<svg class="a" style="left:34px;top:232px;" width="24" height="24" viewBox="0 0 24 24"><path d="M4 20C5 15 9 9 12 12C15 15 7 18 11 19.5C15 21 18 14 20.5 6" fill="none" stroke="#2b8fdc" stroke-width="1.5"/><circle cx="4" cy="20" r="2" fill="#1c3f6e"/><circle cx="20.5" cy="5" r="2.6" fill="#f01818"/></svg>
<svg class="a" style="left:3px;top:264px;" width="24" height="24" viewBox="0 0 24 24"><rect x="4.5" y="4.5" width="15" height="15" fill="#d6e7f6" stroke="#2b8fdc" stroke-width="1.6"/><path d="M5 19L19 5" stroke="#1c3f6e" stroke-width="1.3"/><circle cx="19.5" cy="4.5" r="2.7" fill="#f01818"/><circle cx="5" cy="19" r="2" fill="#1c3f6e"/></svg>
<svg class="a" style="left:34px;top:264px;" width="24" height="24" viewBox="0 0 24 24"><path d="M5 5H19V19H5Z" fill="#d6e7f6" stroke="#2b8fdc" stroke-width="1.5" stroke-dasharray="2 1"/><path d="M5 5C12 5 19 12 19 19" fill="none" stroke="#1c3f6e" stroke-width="1.6"/><circle cx="5" cy="5" r="3" fill="#f01818"/><circle cx="5" cy="19" r="2" fill="#1c3f6e"/><circle cx="19" cy="19" r="2" fill="#1c3f6e"/></svg>
<svg class="a" style="left:3px;top:296px;" width="24" height="24" viewBox="0 0 24 24"><circle cx="11" cy="13" r="8.5" fill="none" stroke="#2b8fdc" stroke-width="1.6"/><path d="M11 13L18 6" stroke="#1c3f6e" stroke-width="1.3"/><circle cx="11" cy="13" r="2" fill="#1c3f6e"/><circle cx="18" cy="5.5" r="2.7" fill="#f01818"/></svg>
<svg class="a" style="left:34px;top:296px;" width="24" height="24" viewBox="0 0 24 24"><path d="M6 4H17L22 12L17 20H6L1 12Z" fill="none" stroke="#2b8fdc" stroke-width="1.5"/><path d="M11 13L18 5" stroke="#1c3f6e" stroke-width="1.3"/><circle cx="11" cy="13" r="2" fill="#1c3f6e"/><circle cx="18" cy="4.5" r="2.7" fill="#f01818"/></svg>
<svg class="a" style="left:3px;top:328px;" width="24" height="24" viewBox="0 0 24 24"><path d="M4 20C14 20 20 14 20 5" fill="none" stroke="#2b8fdc" stroke-width="1.6"/><path d="M4 4V20L20 5" fill="none" stroke="#1c3f6e" stroke-width="1.2"/><circle cx="4" cy="4" r="2" fill="#1c3f6e"/><circle cx="4" cy="20" r="2" fill="#1c3f6e"/><circle cx="20" cy="5" r="2.7" fill="#f01818"/></svg>
<svg class="a" style="left:34px;top:328px;" width="24" height="24" viewBox="0 0 24 24"><path d="M5 6A13 13 0 0 1 20 5" fill="none" stroke="#2b8fdc" stroke-width="1.6"/><path d="M5 6C3 10 3.5 16 6 19" fill="none" stroke="#2b8fdc" stroke-width="1.6"/><path d="M5 6L11 12L6 19M11 12L20 5" stroke="#1c3f6e" stroke-width="1.2" fill="none"/><circle cx="5" cy="6" r="2.6" fill="#f01818"/><circle cx="20" cy="5" r="2" fill="#1c3f6e"/><circle cx="6" cy="19" r="2" fill="#1c3f6e"/></svg>
<svg class="a" style="left:3px;top:360px;" width="24" height="24" viewBox="0 0 24 24"><path d="M7 4C14 2 20 9 18 18" fill="none" stroke="#2b8fdc" stroke-width="1.6"/><path d="M4 15C4 17 5 18 7 19" fill="none" stroke="#2b8fdc" stroke-width="1.6"/><path d="M7 4L11 12L4 15M11 12L18 18" stroke="#1c3f6e" stroke-width="1.2" fill="none"/><circle cx="7" cy="4" r="2.7" fill="#f01818"/><circle cx="4" cy="15" r="2" fill="#1c3f6e"/><circle cx="18" cy="19" r="2" fill="#1c3f6e"/></svg>
<svg class="a" style="left:34px;top:360px;" width="24" height="24" viewBox="0 0 24 24"><path d="M20 5C22 12 18 19 4 20" fill="none" stroke="#2b8fdc" stroke-width="1.6"/><path d="M4 4H20M4 4V20L20 5" fill="none" stroke="#1c3f6e" stroke-width="1.3"/><path d="M4 4H20" stroke="#2b8fdc" stroke-width="1.6"/><circle cx="4" cy="4" r="2" fill="#1c3f6e"/><circle cx="4" cy="20" r="2" fill="#1c3f6e"/><circle cx="20" cy="5" r="2.7" fill="#f01818"/></svg>
<svg class="a" style="left:3px;top:398px;" width="24" height="24" viewBox="0 0 24 24"><path d="M12 5V9.5M12 14.5V19M5 12H9.5M14.5 12H19" stroke="#f01818" stroke-width="1.8"/><path d="M12 1.5L15.5 6H8.5Z M12 22.5L8.5 18H15.5Z M1.5 12L6 8.5V15.5Z M22.5 12L18 15.5V8.5Z" fill="#f01818"/></svg>
<svg class="a" style="left:34px;top:398px;" width="24" height="24" viewBox="0 0 24 24"><path d="M2 15L12 10L22 15L12 20Z" fill="#d6e7f6" stroke="#2b8fdc" stroke-width="1.5"/><path d="M2 15V18L12 23L22 18V15" fill="none" stroke="#2b8fdc" stroke-width="1.5"/><path d="M10 15V8H7L12 2L17 8H14V15Z" fill="#f01818"/></svg>
<svg class="a" style="left:3px;top:430px;" width="24" height="24" viewBox="0 0 24 24"><path d="M5 10A7.5 7.5 0 0 1 17 6" fill="none" stroke="#f01818" stroke-width="2.2"/><path d="M19 14A7.5 7.5 0 0 1 7 18" fill="none" stroke="#f01818" stroke-width="2.2"/><path d="M14 2L21 5L15 9Z" fill="#f01818"/><path d="M10 22L3 19L9 15Z" fill="#f01818"/></svg>
<svg class="a" style="left:34px;top:430px;" width="24" height="24" viewBox="0 0 24 24"><path d="M11 6C5 7 3.5 13 6 17C7.5 19.5 10 20 12 19" fill="none" stroke="#2b8fdc" stroke-width="7" stroke-linecap="round"/><path d="M11 6C5 7 3.5 13 6 17C7.5 19.5 10 20 12 19" fill="none" stroke="#d6e7f6" stroke-width="4.2" stroke-linecap="round"/><path d="M11 5.5C14 3.5 17 4 19 6" fill="none" stroke="#1c3f6e" stroke-width="1.4"/><circle cx="20" cy="7.5" r="2.6" fill="#f01818"/></svg>
<svg class="a" style="left:3px;top:462px;" width="24" height="24" viewBox="0 0 24 24"><rect x="3" y="3" width="18" height="18" fill="#d6e7f6" stroke="#2b8fdc" stroke-width="1.5"/><path d="M3 11.5H12.5V21H3Z" fill="none" stroke="#1c3f6e" stroke-width="1.8"/><path d="M10 14L16 8L14 6H20.5V12.5L18.5 10.5L12.5 16.5Z" fill="#f01818"/></svg>
<svg class="a" style="left:34px;top:462px;" width="24" height="24" viewBox="0 0 24 24"><path d="M5 17A8 8 0 0 1 13 8" fill="none" stroke="#1c3f6e" stroke-width="1.8"/><path d="M3 10A11 11 0 0 1 14 3" fill="none" stroke="#2b8fdc" stroke-width="1.6"/><path d="M17 11A8 8 0 0 1 12 21" fill="none" stroke="#2b8fdc" stroke-width="1.6"/><path d="M11 14L18 6L16 4H22V10L20 8L13 16Z" fill="#f01818"/></svg>
<svg class="a" style="left:3px;top:494px;" width="24" height="24" viewBox="0 0 24 24"><path d="M12 12V2M10 5L12 1L14 5" stroke="#2a80d0" stroke-width="1.5" fill="none"/><path d="M12 12L22 21M18 21L22 21L21 17" stroke="#f01818" stroke-width="1.5" fill="none"/><path d="M12 12L21 5M17 5H21V9" stroke="#22a040" stroke-width="1.5" fill="none"/><path d="M12 12L2 7M12 12L3 18M12 12V22" stroke="#f01818" stroke-width="1" stroke-dasharray="1.5 1.5"/><circle cx="12" cy="12" r="3" fill="#1c3f6e"/></svg>
<svg class="a" style="left:34px;top:494px;" width="24" height="24" viewBox="0 0 24 24"><path d="M2 21L11 5V21Z" fill="#fff" stroke="#1c3f6e" stroke-width="1.5"/><path d="M13 5L22 21H13Z" fill="#d6e7f6" stroke="#1c3f6e" stroke-width="1.5"/><path d="M12 2V23" stroke="#f01818" stroke-width="1.5" stroke-dasharray="2 1.5"/></svg>
<svg class="a" style="left:3px;top:532px;" width="24" height="24" viewBox="0 0 24 24"><g transform="rotate(-25 13 10)"><rect x="6" y="4" width="14" height="11" rx="3" fill="#fff" stroke="#1c3f6e" stroke-width="1.5"/></g><circle cx="13" cy="10" r="3.2" fill="#f01818"/><path d="M7.5 15.5L3 21.5" stroke="#1c3f6e" stroke-width="1.4"/><path d="M6 12.5C3.5 13 3.5 16 6 16.5" fill="none" stroke="#1c3f6e" stroke-width="1"/></svg>
<svg class="a" style="left:34px;top:532px;" width="24" height="24" viewBox="0 0 24 24"><path d="M3 14L14 3M8 19L19 8M5 9L13 17" stroke="#1c3f6e" stroke-width="1.4"/><circle cx="19" cy="13" r="2.7" fill="#f01818"/><circle cx="12" cy="21" r="2.7" fill="#f01818"/><text x="9" y="9" font-size="6" fill="#1c3f6e" font-family="Liberation Sans" transform="rotate(-45 9 9)">5</text></svg>
<svg class="a" style="left:3px;top:564px;" width="24" height="24" viewBox="0 0 24 24"><path d="M3 21L19 5A11 11 0 0 0 3 21Z" fill="#fff" stroke="#1c3f6e" stroke-width="1.8"/><path d="M6 18L16 8A7 7 0 0 0 6 18Z" fill="none" stroke="#1c3f6e" stroke-width="1" stroke-dasharray="1 1"/></svg>
<svg class="a" style="left:34px;top:564px;" width="24" height="24" viewBox="0 0 24 24"><rect x="8" y="3" width="14" height="12" fill="#fff" stroke="#1c3f6e" stroke-width="1.5"/><text x="15" y="12.5" font-size="7.5" fill="#1c3f6e" text-anchor="middle" font-family="Liberation Serif" font-weight="bold">A1</text><path d="M8 10H5V22M3 19L5 23L7 19" fill="none" stroke="#1c3f6e" stroke-width="1.3"/></svg>
<svg class="a" style="left:3px;top:596px;" width="24" height="24" viewBox="0 0 24 24"><circle cx="12" cy="12" r="7" fill="none" stroke="#1c3f6e" stroke-width="1.5"/><path d="M1 12H20M14 4L21 12L14 20" fill="none" stroke="#1c3f6e" stroke-width="1.6"/><text x="12" y="10" font-size="5" fill="#1c3f6e" text-anchor="middle" font-family="Liberation Sans">C</text><text x="12" y="17.5" font-size="4.5" fill="#1c3f6e" text-anchor="middle" font-family="Liberation Sans">A-B</text></svg>
<svg class="a" style="left:34px;top:596px;" width="24" height="24" viewBox="0 0 24 24"><path d="M5 22L11 2H14L20 22H16L14.5 16H10L8.5 22Z M10.8 13H13.7L12.3 7Z" fill="#3aa0e8" stroke="#1e6fb8" stroke-width="0.8"/></svg>
<svg class="a" style="left:3px;top:634px;" width="24" height="24" viewBox="0 0 24 24"><path d="M12 2V22" stroke="#1c3f6e" stroke-width="1.5"/><path d="M4 9C1 12 3 16 10 17M14 17C21 16 23 12 20 9" fill="none" stroke="#f01818" stroke-width="3"/><path d="M4 9C8 7 16 7 20 9" fill="none" stroke="#f01818" stroke-width="2"/><path d="M8 14L11 17L8 20Z" fill="#f01818"/></svg>
<svg class="a" style="left:34px;top:634px;" width="24" height="24" viewBox="0 0 24 24"><path d="M9 21C6 19 5 15 6 13L8 14V7A1.5 1.5 0 0 1 11 7V12L13 11L16 12L18 13C19 14 19 19 17 21Z" fill="#d6e7f6" stroke="#1c3f6e" stroke-width="1.3"/><path d="M2 4H11M13 4H22" stroke="#f01818" stroke-width="2"/><path d="M5 1V7L1 4ZM19 1V7L23 4Z" fill="#f01818"/></svg>
<svg class="a" style="left:3px;top:666px;" width="24" height="24" viewBox="0 0 24 24"><circle cx="14" cy="10" r="6.5" fill="none" stroke="#1c3f6e" stroke-width="2"/><path d="M9.5 14.5L3.5 20.5" stroke="#1c3f6e" stroke-width="2.6"/></svg>
<svg class="a" style="left:34px;top:666px;" width="24" height="24" viewBox="0 0 24 24"><rect x="2" y="2" width="20" height="20" fill="none" stroke="#2b8fdc" stroke-width="1.3" stroke-dasharray="1.3 1.3"/><circle cx="13" cy="10" r="6.5" fill="none" stroke="#1c3f6e" stroke-width="2"/><path d="M9 14L4 19" stroke="#1c3f6e" stroke-width="2.6"/></svg>
<svg class="a" style="left:3px;top:698px;" width="24" height="24" viewBox="0 0 24 24"><circle cx="12" cy="12" r="4.5" fill="none" stroke="#1c3f6e" stroke-width="1.6"/><path d="M9 15L3 21" stroke="#1c3f6e" stroke-width="2"/><path d="M2 2L7 3L3 7Z M22 2L21 7L17 3Z M22 22L17 21L21 17Z" fill="#f01818"/><path d="M4 4L8 8M20 4L16 8M20 20L16 16" stroke="#f01818" stroke-width="1.4"/></svg>
<svg class="a" style="left:34px;top:698px;" width="24" height="24" viewBox="0 0 24 24"><path d="M3 15V5L6 3H9L10 5H19V12" fill="none" stroke="#1c3f6e" stroke-width="1.4"/><path d="M3 15H10" stroke="#1c3f6e" stroke-width="1.4"/><path d="M12 9A6 6 0 1 1 15 20" fill="none" stroke="#f01818" stroke-width="1.5"/><path d="M9 8L14 6L13 11Z" fill="#f01818"/></svg>
<svg class="a" style="left:3px;top:736px;" width="24" height="24" viewBox="0 0 24 24"><rect x="5" y="3" width="13" height="9" rx="1" fill="#d6e7f6" stroke="#1c3f6e" stroke-width="1.3"/><circle cx="11.5" cy="7.5" r="3" fill="#f01818"/><path d="M11.5 12L6 21M11.5 12L17 21M11.5 12V21" stroke="#1c3f6e" stroke-width="1.3"/><ellipse cx="11.5" cy="22" rx="5" ry="1" fill="#bbb"/></svg>
<svg class="a" style="left:34px;top:736px;" width="24" height="24" viewBox="0 0 24 24"><circle cx="12" cy="3" r="2" fill="#1c3f6e"/><path d="M12 6L10 13L7 21M10 13L14 16L16 21M12 7L15 12" stroke="#1c3f6e" stroke-width="2.4" fill="none"/><rect x="7" y="7" width="3" height="5" fill="#f01818"/><path d="M18 8V22M4 22H20" stroke="#1c3f6e" stroke-width="1"/></svg>
<svg class="a" style="left:3px;top:768px;" width="24" height="24" viewBox="0 0 24 24"><path d="M3 13C6 7 18 7 21 13C18 19 6 19 3 13Z" fill="#fff" stroke="#1c3f6e" stroke-width="1.6"/><circle cx="13" cy="13" r="4.5" fill="#2b9ae6"/><circle cx="13" cy="13" r="2" fill="#fff"/><path d="M4 11C8 6 17 5 21 11L20 8C16 4 8 4 3 8Z" fill="#1c3f6e"/><path d="M1 8L5 9M1 10L4 10.5" stroke="#1c3f6e" stroke-width="1"/></svg>
<svg class="a" style="left:34px;top:768px;" width="24" height="24" viewBox="0 0 24 24"><path d="M21 3L2 12L21 21" fill="none" stroke="#1c3f6e" stroke-width="1.5" stroke-dasharray="3 1"/><path d="M2 12L15 6M2 12L15 18" stroke="#1c3f6e" stroke-width="1.5"/><path d="M17 6C20 9 20 15 17 18" fill="none" stroke="#2b9ae6" stroke-width="1.6"/><path d="M13 7C15 10 15 14 13 17" fill="none" stroke="#1c3f6e" stroke-width="1"/></svg>
<svg class="a" style="left:3px;top:806px;" width="24" height="24" viewBox="0 0 24 24"><path d="M11 1.5L20 6.5V13M2 6.5V16.5L11 21.5" fill="none" stroke="#1a5ea8" stroke-width="2.6"/><path d="M2 6.5L11 1.5" stroke="#1a5ea8" stroke-width="2.6"/><path d="M11 5.5L16.5 8.5V14.5L11 17.5L5.5 14.5V8.5Z" fill="none" stroke="#1a5ea8" stroke-width="2"/><path d="M11 9V11.5M11 11.5L8.8 13M11 11.5L13.2 13" stroke="#1a5ea8" stroke-width="1.4"/><path d="M15 13V18.5H12.5L17.5 23.5L22.5 18.5H20V13Z" fill="#fff" stroke="#1a5ea8" stroke-width="1.4"/></svg>
<svg class="a" style="left:34px;top:806px;" width="24" height="24" viewBox="0 0 24 24"><path d="M1 3C6 4 9 8.5 12 8.5C15 8.5 18 4 23 3" fill="none" stroke="#1a5ea8" stroke-width="3.2"/><path d="M1 7.5C5 8.5 8 11 11 12M13 12C16 11 19 8.5 23 7.5" fill="none" stroke="#1a5ea8" stroke-width="2"/><path d="M1 21C6 20 9 15.5 12 15.5C15 15.5 18 20 23 21" fill="none" stroke="#1a5ea8" stroke-width="3.2"/><path d="M1 16.5C5 15.5 8 13 11 12M13 12C16 13 19 15.5 23 16.5" fill="none" stroke="#1a5ea8" stroke-width="2"/><rect x="20" y="1" width="3" height="3" fill="#1a5ea8"/><rect x="20" y="9" width="2.5" height="3" fill="#1a5ea8"/></svg>
<svg class="a" style="left:3px;top:838px;" width="24" height="24" viewBox="0 0 24 24"><path d="M2 7L10.5 3L19 7L10.5 11Z" fill="none" stroke="#1a5ea8" stroke-width="2.4"/><path d="M8 7L10.5 5.8L13 7L10.5 8.2Z" fill="#1a5ea8"/><path d="M2 11L10.5 15L14 13.5M2 15L10.5 19L13 18" fill="none" stroke="#1a5ea8" stroke-width="2.6"/><path d="M13 14.5H17V11L23 17L17 23V19.5H13Z" fill="#fff" stroke="#1a5ea8" stroke-width="1.5"/></svg>
<svg class="a" style="left:34px;top:838px;" width="24" height="24" viewBox="0 0 24 24"><path d="M1 3C6 4 9 8.5 12 8.5C15 8.5 18 4 23 3" fill="none" stroke="#1a5ea8" stroke-width="3.2"/><path d="M1 7.5C5 8.5 8 11 11 12M13 12C16 11 19 8.5 23 7.5" fill="none" stroke="#1a5ea8" stroke-width="2"/><path d="M1 21C6 20 9 15.5 12 15.5C13 15.5 14 16 14.5 16.5" fill="none" stroke="#1a5ea8" stroke-width="3.2"/><path d="M1 16.5C5 15.5 8 13 11 12" fill="none" stroke="#1a5ea8" stroke-width="2"/><circle cx="18" cy="18" r="4.2" fill="#fff" stroke="#1a5ea8" stroke-width="1.5"/><circle cx="18" cy="18" r="1.8" fill="none" stroke="#1a5ea8" stroke-width="1.2"/><path d="M18 12.3V14M18 22V23.7M12.3 18H14M22 18H23.7M14 14L15.2 15.2M20.8 20.8L22 22M14 22L15.2 20.8M20.8 15.2L22 14" stroke="#1a5ea8" stroke-width="1.8"/></svg>
<div class="a" style="left:114px;top:487px;width:1150px;height:834px;background:#202020;box-shadow:0 4px 16px rgba(0,0,0,.45)"></div>
<div class="a" style="left:114px;top:487px;width:1150px;height:30px;background:repeating-linear-gradient(135deg,#2c2c2c 0px,#2c2c2c 1.5px,#282828 1.5px,#282828 3px);"></div>
<div class="a" style="left:114px;top:517px;width:1150px;height:26px;background:#000;"></div>
<div class="a" style="left:114px;top:517px;width:56px;height:23px;background:#4f4f4f;"></div>
<div class="a" style="left:114px;top:543px;width:1150px;height:36px;background:#191919;"></div>
<div class="a" style="left:114px;top:579px;width:157px;height:719px;background:#191919;"></div>
<div class="a" style="left:271px;top:579px;width:2px;height:719px;background:#262626;"></div>
<div class="a" style="left:114px;top:1298px;width:1150px;height:23px;background:#333;"></div>
<svg class="a" style="left:124px;top:494px;" width="13" height="16" viewBox="0 0 13 16"><path d="M0.5 0.5H10.5V7H12.5V15.5H0.5Z" fill="#f7d98e" stroke="#e6b444"/><path d="M3 14C4 8 6 5 9 3V14Z" fill="#f2ca8c" opacity="0.7"/></svg>
<div class="a" style="left:145px;top:495px;width:2px;height:14px;background:#777;"></div>
<svg class="a" style="left:157px;top:494px;" width="13" height="16" viewBox="0 0 13 16"><path d="M0.5 0.5H9L12.5 4V15.5H0.5Z" fill="#fafafa" stroke="#bbb"/><path d="M3 9L6 12L10 6" fill="none" stroke="#e8562a" stroke-width="1.5"/></svg>
<svg class="a" style="left:179px;top:494px;" width="13" height="16" viewBox="0 0 13 16"><path d="M0.5 0.5H10.5V7H12.5V15.5H0.5Z" fill="#f7d98e" stroke="#e6b444"/><path d="M3 14C4 8 6 5 9 3V14Z" fill="#f2ca8c" opacity="0.7"/></svg>
<svg class="a" style="left:200px;top:497px;" width="8" height="10" viewBox="0 0 8 10"><rect x="0" y="1" width="7" height="1.3" fill="#eee"/><path d="M0 4H7L3.5 8Z" fill="#eee"/></svg>
<div class="a" style="left:214px;top:495px;width:2px;height:14px;background:#777;"></div>
<div class="a t" style="left:223px;top:494.0px;font-size:13px;line-height:16px;color:#8c8c8c;">test</div>
<div class="a" style="left:1145px;top:501px;width:11px;height:1px;background:#aaa;"></div>
<div class="a" style="left:1190px;top:496px;width:11px;height:11px;border:1px solid #bbb"></div>
<svg class="a" style="left:1235px;top:495px;" width="12" height="12" viewBox="0 0 12 12"><path d="M0.5 0.5L11.5 11.5M11.5 0.5L0.5 11.5" stroke="#bbb" stroke-width="1.1"/></svg>
<div class="a t" style="left:130px;top:521.5px;font-size:12px;line-height:16px;color:#fff;">文件</div>
<div class="a t" style="left:184px;top:521.5px;font-size:12px;line-height:16px;color:#fff;">主页</div>
<div class="a t" style="left:237px;top:521.5px;font-size:12px;line-height:16px;color:#fff;">共享</div>
<div class="a t" style="left:290px;top:521.5px;font-size:12px;line-height:16px;color:#fff;">查看</div>
<svg class="a" style="left:1225px;top:524px;" width="12" height="10" viewBox="0 0 12 10"><path d="M1.5 2L6 6.5L10.5 2" fill="none" stroke="#ddd" stroke-width="2"/></svg>
<svg class="a" style="left:1244px;top:521px;" width="17" height="17" viewBox="0 0 17 17"><circle cx="8.5" cy="8.5" r="8" fill="#1c6fd6"/><circle cx="8.5" cy="8.5" r="7" fill="#2c88e8"/><text x="8.5" y="13" font-size="12" font-family="Liberation Sans" font-weight="bold" fill="#fff" text-anchor="middle">?</text></svg>
<svg class="a" style="left:126px;top:554px;" width="14" height="14" viewBox="0 0 14 14"><path d="M13 7H2M7 2L2 7L7 12" fill="none" stroke="#fff" stroke-width="1.8"/></svg>
<svg class="a" style="left:156px;top:554px;" width="14" height="14" viewBox="0 0 14 14"><path d="M1 7H12M7 2L12 7L7 12" fill="none" stroke="#888" stroke-width="1.8"/></svg>
<svg class="a" style="left:182px;top:557px;" width="9" height="7" viewBox="0 0 9 7"><path d="M1 1.5L4.5 5L8 1.5" fill="none" stroke="#fff" stroke-width="1.6"/></svg>
<svg class="a" style="left:199px;top:553px;" width="14" height="15" viewBox="0 0 14 15"><path d="M7 14V2M2 7L7 2L12 7" fill="none" stroke="#fff" stroke-width="1.8"/></svg>
<div class="a" style="left:220px;top:549px;width:818px;height:23px;border:1px solid #535353;background:#191919"></div>
<div class="a" style="left:1020px;top:550px;width:1px;height:21px;background:#333;"></div>
<svg class="a" style="left:225px;top:553px;" width="13" height="16" viewBox="0 0 13 16"><path d="M0.5 0.5H10.5V7H12.5V15.5H0.5Z" fill="#f7d98e" stroke="#e6b444"/><path d="M3 14C4 8 6 5 9 3V14Z" fill="#f2ca8c" opacity="0.7"/></svg>
<svg class="a" style="left:246px;top:556px;" width="6" height="9" viewBox="0 0 6 9"><path d="M1 1L4.5 4.5L1 8" fill="none" stroke="#999" stroke-width="1.3"/></svg>
<div class="a t" style="left:262px;top:552.0px;font-size:12px;line-height:16px;color:#fff;">此电脑</div>
<svg class="a" style="left:308px;top:556px;" width="6" height="9" viewBox="0 0 6 9"><path d="M1 1L4.5 4.5L1 8" fill="none" stroke="#999" stroke-width="1.3"/></svg>
<div class="a t" style="left:323px;top:552.0px;font-size:12px;line-height:16px;color:#fff;">桌面</div>
<svg class="a" style="left:357px;top:556px;" width="6" height="9" viewBox="0 0 6 9"><path d="M1 1L4.5 4.5L1 8" fill="none" stroke="#999" stroke-width="1.3"/></svg>
<div class="a t" style="left:372px;top:552.0px;font-size:13px;line-height:16px;color:#fff;">test</div>
<svg class="a" style="left:1007px;top:556px;" width="11" height="8" viewBox="0 0 11 8"><path d="M1 1.5L5.5 6L10 1.5" fill="none" stroke="#ccc" stroke-width="1.8"/></svg>
<svg class="a" style="left:1023px;top:553px;" width="14" height="14" viewBox="0 0 14 14"><path d="M11 7A4.5 4.5 0 1 1 7 2.5" fill="none" stroke="#ccc" stroke-width="1.6"/><path d="M5 0L9 2.5L5.5 5Z" fill="#ccc"/></svg>
<div class="a" style="left:1050px;top:549px;width:202px;height:23px;border:1px solid #535353;background:#191919"></div>
<div class="a t" style="left:1060px;top:553.0px;font-size:12px;line-height:16px;color:#8a8a8a;">在 <span style="font-size:13px">test</span> 中搜索</div>
<svg class="a" style="left:1230px;top:553px;" width="14" height="14" viewBox="0 0 14 14"><circle cx="8.5" cy="5.5" r="4" fill="none" stroke="#ccc" stroke-width="1.5"/><path d="M6 8L1 13" stroke="#ccc" stroke-width="1.8"/></svg>
<div class="a t" style="left:291px;top:584.0px;font-size:12px;line-height:16px;color:#ddd;">名称</div>
<svg class="a" style="left:411px;top:577px;" width="9" height="6" viewBox="0 0 9 6"><path d="M1 5L4.5 1.5L8 5" fill="none" stroke="#999" stroke-width="1"/></svg>
<div class="a" style="left:545px;top:581px;width:1px;height:24px;background:#3c3c3c;"></div>
<div class="a" style="left:689px;top:581px;width:1px;height:24px;background:#3c3c3c;"></div>
<div class="a" style="left:809px;top:581px;width:1px;height:24px;background:#3c3c3c;"></div>
<div class="a" style="left:889px;top:581px;width:1px;height:24px;background:#3c3c3c;"></div>
<div class="a t" style="left:552px;top:584.0px;font-size:12px;line-height:16px;color:#ddd;">修改日期</div>
<div class="a t" style="left:696px;top:584.0px;font-size:12px;line-height:16px;color:#ddd;">类型</div>
<div class="a t" style="left:816px;top:584.0px;font-size:12px;line-height:16px;color:#ddd;">大小</div>
<svg class="a" style="left:292px;top:614px;" width="16" height="16" viewBox="0 0 16 16"><defs><linearGradient id="eg1" x1="0" y1="0" x2="1" y2="0"><stop offset="0" stop-color="#1e8ff0"/><stop offset="0.55" stop-color="#2fb0f0"/><stop offset="1" stop-color="#3dcf4a"/></linearGradient></defs><circle cx="8" cy="8" r="8" fill="url(#eg1)"/><path d="M4.5 9.5C5 13 8 14.5 11 14.2C13 14 14.8 12.5 15.6 11C13 11.8 10.5 11.5 9 10.5C7.5 9.5 7 8 7.5 7C6 7 4.7 8 4.5 9.5Z" fill="#1a5fc0"/><ellipse cx="8.3" cy="8.3" rx="1.5" ry="2" fill="#202020"/><path d="M9.5 10.8C11.5 11.6 13.5 11.5 15.6 10.8" fill="none" stroke="#1a3050" stroke-width="0.9"/></svg>
<div class="a t" style="left:312px;top:615.0px;font-size:13px;line-height:16px;color:#fff;">test-1.xml</div>
<div class="a t" style="left:552px;top:615.0px;font-size:13px;line-height:16px;color:#fff;">2025/5/16 13:08</div>
<div class="a t" style="left:696px;top:615.0px;font-size:13px;line-height:16px;color:#fff;">Microsoft Edge ...</div>
<div class="a t" style="left:853px;top:615.0px;font-size:13px;line-height:16px;color:#fff;">5 KB</div>
<svg class="a" style="left:292px;top:635px;" width="16" height="16" viewBox="0 0 16 16"><defs><linearGradient id="eg1" x1="0" y1="0" x2="1" y2="0"><stop offset="0" stop-color="#1e8ff0"/><stop offset="0.55" stop-color="#2fb0f0"/><stop offset="1" stop-color="#3dcf4a"/></linearGradient></defs><circle cx="8" cy="8" r="8" fill="url(#eg1)"/><path d="M4.5 9.5C5 13 8 14.5 11 14.2C13 14 14.8 12.5 15.6 11C13 11.8 10.5 11.5 9 10.5C7.5 9.5 7 8 7.5 7C6 7 4.7 8 4.5 9.5Z" fill="#1a5fc0"/><ellipse cx="8.3" cy="8.3" rx="1.5" ry="2" fill="#202020"/><path d="M9.5 10.8C11.5 11.6 13.5 11.5 15.6 10.8" fill="none" stroke="#1a3050" stroke-width="0.9"/></svg>
<div class="a t" style="left:312px;top:636.0px;font-size:13px;line-height:16px;color:#fff;">test-2.xml</div>
<div class="a t" style="left:552px;top:636.0px;font-size:13px;line-height:16px;color:#fff;">2025/5/16 13:08</div>
<div class="a t" style="left:696px;top:636.0px;font-size:13px;line-height:16px;color:#fff;">Microsoft Edge ...</div>
<div class="a t" style="left:853px;top:636.0px;font-size:13px;line-height:16px;color:#fff;">5 KB</div>
<div class="a" style="left:116px;top:1067px;width:153px;height:23px;background:#333;"></div>
<div class="a" style="left:114px;top:579px;width:157px;height:719px;overflow:hidden">
<div class="a" style="left:-114px;top:-579px;width:1275px;height:1357px">
<svg class="a" style="left:140px;top:598px;" width="16" height="16" viewBox="0 0 16 16"><path d="M9 1L11 6.5L16 6.8L12 10L13.5 15L9 12L4.5 15L6 10L2 6.8L7 6.5Z" fill="#3aa0f0"/><path d="M0 9H4M1 12H4" stroke="#3aa0f0" stroke-width="0.8"/></svg>
<div class="a t" style="left:159px;top:599.0px;font-size:12px;line-height:16px;color:#fff;">快速访问</div>
<svg class="a" style="left:146px;top:625px;" width="17" height="13" viewBox="0 0 17 13"><rect x="0" y="0" width="16" height="12" fill="#2a9be6"/><rect x="0" y="10" width="16" height="2" fill="#e8f4fc"/></svg>
<div class="a t" style="left:167px;top:623.0px;font-size:12px;line-height:16px;color:#fff;">桌面</div>
<svg class="a" style="left:256px;top:625px;" width="12" height="12" viewBox="0 0 12 12"><path d="M7 1L11 5L9.5 5.5L7.5 8.5L8 10L2 4L3.5 4.5L6.5 2.5Z" fill="#999"/><path d="M4.5 7.5L1 11" stroke="#999" stroke-width="1.3"/></svg>
<svg class="a" style="left:146px;top:647px;" width="16" height="17" viewBox="0 0 16 17"><path d="M5 0H11V8H15L8 16L1 8H5Z" fill="#3a91e0"/></svg>
<div class="a t" style="left:167px;top:647.0px;font-size:12px;line-height:16px;color:#fff;">下载</div>
<svg class="a" style="left:256px;top:649px;" width="12" height="12" viewBox="0 0 12 12"><path d="M7 1L11 5L9.5 5.5L7.5 8.5L8 10L2 4L3.5 4.5L6.5 2.5Z" fill="#999"/><path d="M4.5 7.5L1 11" stroke="#999" stroke-width="1.3"/></svg>
<svg class="a" style="left:148px;top:671px;" width="13" height="16" viewBox="0 0 13 16"><path d="M0.5 0.5H8.5L12.5 4.5V15.5H0.5Z" fill="#f6f6f6" stroke="#999"/><path d="M3 6H10M3 8.5H10M3 11H10" stroke="#3b88d6" stroke-width="1"/></svg>
<div class="a t" style="left:167px;top:671.0px;font-size:12px;line-height:16px;color:#fff;">文档</div>
<svg class="a" style="left:256px;top:673px;" width="12" height="12" viewBox="0 0 12 12"><path d="M7 1L11 5L9.5 5.5L7.5 8.5L8 10L2 4L3.5 4.5L6.5 2.5Z" fill="#999"/><path d="M4.5 7.5L1 11" stroke="#999" stroke-width="1.3"/></svg>
<svg class="a" style="left:146px;top:696px;" width="16" height="13" viewBox="0 0 16 13"><rect x="0.5" y="0.5" width="15" height="12" fill="#eee" stroke="#aaa"/><rect x="2" y="2" width="12" height="9" fill="#6cb2e0"/><path d="M2 8L6 6L10 8L14 7V11H2Z" fill="#2d6a4a"/></svg>
<div class="a t" style="left:167px;top:695.0px;font-size:12px;line-height:16px;color:#fff;">图片</div>
<svg class="a" style="left:256px;top:697px;" width="12" height="12" viewBox="0 0 12 12"><path d="M7 1L11 5L9.5 5.5L7.5 8.5L8 10L2 4L3.5 4.5L6.5 2.5Z" fill="#999"/><path d="M4.5 7.5L1 11" stroke="#999" stroke-width="1.3"/></svg>
<svg class="a" style="left:147px;top:719px;" width="13" height="16" viewBox="0 0 13 16"><path d="M0.5 0.5H10.5V7H12.5V15.5H0.5Z" fill="#f7d98e" stroke="#e6b444"/><path d="M3 14C4 8 6 5 9 3V14Z" fill="#f2ca8c" opacity="0.7"/></svg>
<div class="a t" style="left:167px;top:719.0px;font-size:12px;line-height:16px;color:#fff;"><span style="font-size:13px">lightbox</span></div>
<svg class="a" style="left:256px;top:721px;" width="12" height="12" viewBox="0 0 12 12"><path d="M7 1L11 5L9.5 5.5L7.5 8.5L8 10L2 4L3.5 4.5L6.5 2.5Z" fill="#999"/><path d="M4.5 7.5L1 11" stroke="#999" stroke-width="1.3"/></svg>
<svg class="a" style="left:147px;top:743px;" width="13" height="16" viewBox="0 0 13 16"><path d="M0.5 0.5H10.5V7H12.5V15.5H0.5Z" fill="#f7d98e" stroke="#e6b444"/><path d="M3 14C4 8 6 5 9 3V14Z" fill="#f2ca8c" opacity="0.7"/></svg>
<div class="a t" style="left:167px;top:743.0px;font-size:12px;line-height:16px;color:#fff;"><span style="font-size:13px">2025-04</span></div>
<svg class="a" style="left:256px;top:745px;" width="12" height="12" viewBox="0 0 12 12"><path d="M7 1L11 5L9.5 5.5L7.5 8.5L8 10L2 4L3.5 4.5L6.5 2.5Z" fill="#999"/><path d="M4.5 7.5L1 11" stroke="#999" stroke-width="1.3"/></svg>
<svg class="a" style="left:147px;top:767px;" width="13" height="16" viewBox="0 0 13 16"><path d="M0.5 0.5H10.5V7H12.5V15.5H0.5Z" fill="#f7d98e" stroke="#e6b444"/><path d="M3 14C4 8 6 5 9 3V14Z" fill="#f2ca8c" opacity="0.7"/></svg>
<div class="a t" style="left:167px;top:767.0px;font-size:12px;line-height:16px;color:#fff;"><span style="font-size:13px">2x</span></div>
<svg class="a" style="left:147px;top:791px;" width="13" height="16" viewBox="0 0 13 16"><path d="M0.5 0.5H10.5V7H12.5V15.5H0.5Z" fill="#f7d98e" stroke="#e6b444"/><path d="M3 14C4 8 6 5 9 3V14Z" fill="#f2ca8c" opacity="0.7"/></svg>
<div class="a t" style="left:167px;top:791.0px;font-size:12px;line-height:16px;color:#fff;"><span style="font-size:13px">003</span></div>
<svg class="a" style="left:147px;top:815px;" width="13" height="16" viewBox="0 0 13 16"><path d="M0.5 0.5H10.5V7H12.5V15.5H0.5Z" fill="#f7d98e" stroke="#e6b444"/><path d="M3 14C4 8 6 5 9 3V14Z" fill="#f2ca8c" opacity="0.7"/></svg>
<div class="a t" style="left:167px;top:815.0px;font-size:12px;line-height:16px;color:#fff;"><span style="font-size:13px">test</span></div>
<svg class="a" style="left:147px;top:839px;" width="13" height="16" viewBox="0 0 13 16"><path d="M0.5 0.5H10.5V7H12.5V15.5H0.5Z" fill="#f7d98e" stroke="#e6b444"/><path d="M3 14C4 8 6 5 9 3V14Z" fill="#f2ca8c" opacity="0.7"/></svg>
<div class="a t" style="left:167px;top:839.0px;font-size:12px;line-height:16px;color:#fff;">临时文件夹</div>
<svg class="a" style="left:137px;top:872px;" width="17" height="11" viewBox="0 0 17 11"><path d="M4 10.5A3.5 3.5 0 0 1 3.5 3.6A4.5 4.5 0 0 1 11.5 2.5A3.8 3.8 0 0 1 13 10.5Z" fill="#1f8fe0"/></svg>
<div class="a t" style="left:159px;top:871.0px;font-size:12px;line-height:16px;color:#fff;"><span style="font-size:13px">OneDrive - Persona</span></div>
<svg class="a" style="left:138px;top:903px;" width="17" height="15" viewBox="0 0 17 15"><rect x="0.5" y="0.5" width="15" height="10" fill="#7cc8f5" stroke="#9ad"/><rect x="1.5" y="1.5" width="13" height="8" fill="#3ab0ee"/><rect x="6" y="11" width="4" height="2" fill="#9ab"/><rect x="1" y="13" width="14" height="1.5" fill="#ccd"/></svg>
<div class="a t" style="left:159px;top:903.0px;font-size:12px;line-height:16px;color:#fff;">此电脑</div>
<svg class="a" style="left:146px;top:926px;" width="16" height="16" viewBox="0 0 16 16"><path d="M8 0.5L15.5 3.5V12.5L8 15.5L0.5 12.5V3.5Z" fill="#5bc6e8"/><path d="M0.5 3.5L8 6.5L15.5 3.5L8 0.5Z" fill="#bde9f7"/><path d="M8 6.5V15.5L15.5 12.5V3.5Z" fill="#2b9fd0"/></svg>
<div class="a t" style="left:167px;top:927.0px;font-size:12px;line-height:16px;color:#fff;"><span style="font-size:13px">3D</span> 对象</div>
<svg class="a" style="left:148px;top:950px;" width="13" height="16" viewBox="0 0 13 16"><rect x="0" y="0" width="13" height="16" fill="#333"/><rect x="3" y="1" width="7" height="6.5" fill="#4a7ad0"/><rect x="3" y="8.5" width="7" height="6.5" fill="#d0a030"/><path d="M0.5 1V15M12.5 1V15" stroke="#ddd" stroke-width="1" stroke-dasharray="1.5 1.5"/></svg>
<div class="a t" style="left:167px;top:951.0px;font-size:12px;line-height:16px;color:#fff;">视频</div>
<svg class="a" style="left:146px;top:976px;" width="16" height="13" viewBox="0 0 16 13"><rect x="0.5" y="0.5" width="15" height="12" fill="#eee" stroke="#aaa"/><rect x="2" y="2" width="12" height="9" fill="#6cb2e0"/><path d="M2 8L6 6L10 8L14 7V11H2Z" fill="#2d6a4a"/></svg>
<div class="a t" style="left:167px;top:975.0px;font-size:12px;line-height:16px;color:#fff;">图片</div>
<svg class="a" style="left:148px;top:999px;" width="13" height="16" viewBox="0 0 13 16"><path d="M0.5 0.5H8.5L12.5 4.5V15.5H0.5Z" fill="#f6f6f6" stroke="#999"/><path d="M3 6H10M3 8.5H10M3 11H10" stroke="#3b88d6" stroke-width="1"/></svg>
<div class="a t" style="left:167px;top:999.0px;font-size:12px;line-height:16px;color:#fff;">文档</div>
<svg class="a" style="left:146px;top:1023px;" width="16" height="17" viewBox="0 0 16 17"><path d="M5 0H11V8H15L8 16L1 8H5Z" fill="#3a91e0"/></svg>
<div class="a t" style="left:167px;top:1023.0px;font-size:12px;line-height:16px;color:#fff;">下载</div>
<svg class="a" style="left:148px;top:1045px;" width="12" height="17" viewBox="0 0 12 17"><ellipse cx="4" cy="13.5" rx="3.6" ry="3" fill="#2e9be6"/><path d="M6.6 13V1C8 4 11 4.5 11 8" fill="none" stroke="#2e9be6" stroke-width="1.8"/></svg>
<div class="a t" style="left:167px;top:1047.0px;font-size:12px;line-height:16px;color:#fff;">音乐</div>
<svg class="a" style="left:146px;top:1073px;" width="17" height="13" viewBox="0 0 17 13"><rect x="0" y="0" width="16" height="12" fill="#2a9be6"/><rect x="0" y="10" width="16" height="2" fill="#e8f4fc"/></svg>
<div class="a t" style="left:167px;top:1071.0px;font-size:12px;line-height:16px;color:#fff;">桌面</div>
<svg class="a" style="left:146px;top:1093px;" width="17" height="16" viewBox="0 0 17 16"><rect x="0" y="0" width="3" height="3" fill="#2a9be6"/><rect x="3.5" y="3.5" width="3" height="3" fill="#2a9be6"/><path d="M1.5 9L4 6H13L15.5 9Z" fill="#e6e6e6"/><rect x="1" y="9" width="15" height="5.5" fill="#8a8a8a"/><rect x="1" y="9" width="15" height="1.2" fill="#cfcfcf"/><rect x="12" y="11.5" width="2" height="1.2" fill="#3c3"/></svg>
<div class="a t" style="left:167px;top:1095.0px;font-size:12px;line-height:16px;color:#fff;">本地磁盘 <span style="font-size:13px">(C:)</span></div>
<svg class="a" style="left:146px;top:1121px;" width="17" height="12" viewBox="0 0 17 12"><path d="M1.5 5L4 2H13L15.5 5Z" fill="#e6e6e6"/><rect x="1" y="5" width="15" height="5.5" fill="#8a8a8a"/><rect x="1" y="5" width="15" height="1.2" fill="#cfcfcf"/><rect x="12" y="7.5" width="2" height="1.2" fill="#3c3"/></svg>
<div class="a t" style="left:167px;top:1119.0px;font-size:12px;line-height:16px;color:#fff;"><span style="font-size:13px">tools (D:)</span></div>
<svg class="a" style="left:146px;top:1145px;" width="17" height="12" viewBox="0 0 17 12"><path d="M1.5 5L4 2H13L15.5 5Z" fill="#e6e6e6"/><rect x="1" y="5" width="15" height="5.5" fill="#8a8a8a"/><rect x="1" y="5" width="15" height="1.2" fill="#cfcfcf"/><rect x="12" y="7.5" width="2" height="1.2" fill="#3c3"/></svg>
<div class="a t" style="left:167px;top:1143.0px;font-size:12px;line-height:16px;color:#fff;"><span style="font-size:13px">files (E:)</span></div>
<svg class="a" style="left:137px;top:1173px;" width="17" height="17" viewBox="0 0 17 17"><circle cx="11" cy="6" r="5.5" fill="#3e8fd8"/><path d="M7 3C9 5 13 4 15 6" stroke="#bfe" fill="none"/><rect x="0.5" y="7" width="9" height="6.5" fill="#7ac7f3" stroke="#4a9ad8"/><rect x="4" y="14" width="2" height="2" fill="#ccc"/><rect x="2" y="15.5" width="6" height="1.2" fill="#ccc"/></svg>
<div class="a t" style="left:159px;top:1175.0px;font-size:12px;line-height:16px;color:#fff;">网络</div>
</div></div>
<div class="a t" style="left:128px;top:1301.0px;font-size:12px;line-height:16px;color:#ddd;"><span style="font-size:13px">2</span> 个项目</div>
<div class="a" style="left:184px;top:1304px;width:1px;height:10px;background:#ccc;"></div>
<div class="a" style="left:1216px;top:1299px;width:21px;height:21px;background:#595959;"></div>
<svg class="a" style="left:1221px;top:1303px;" width="12" height="15" viewBox="0 0 12 15"><rect x="0" y="0" width="4" height="3.5" fill="#ddd"/><rect x="0" y="5" width="4" height="3.5" fill="#ddd"/><rect x="0" y="10" width="4" height="3.5" fill="#ddd"/><path d="M5 1.5H11M5 6.5H11M5 11.5H11" stroke="#888" stroke-width="0.8"/></svg>
<svg class="a" style="left:1241px;top:1303px;" width="15" height="12" viewBox="0 0 15 12"><rect x="0.5" y="0.5" width="14" height="11" fill="#eee"/><rect x="2" y="2" width="11" height="8" fill="#4c9ad8"/><path d="M2 7L6 5L10 7L13 6V10H2Z" fill="#2a5a40"/></svg></body></html>
